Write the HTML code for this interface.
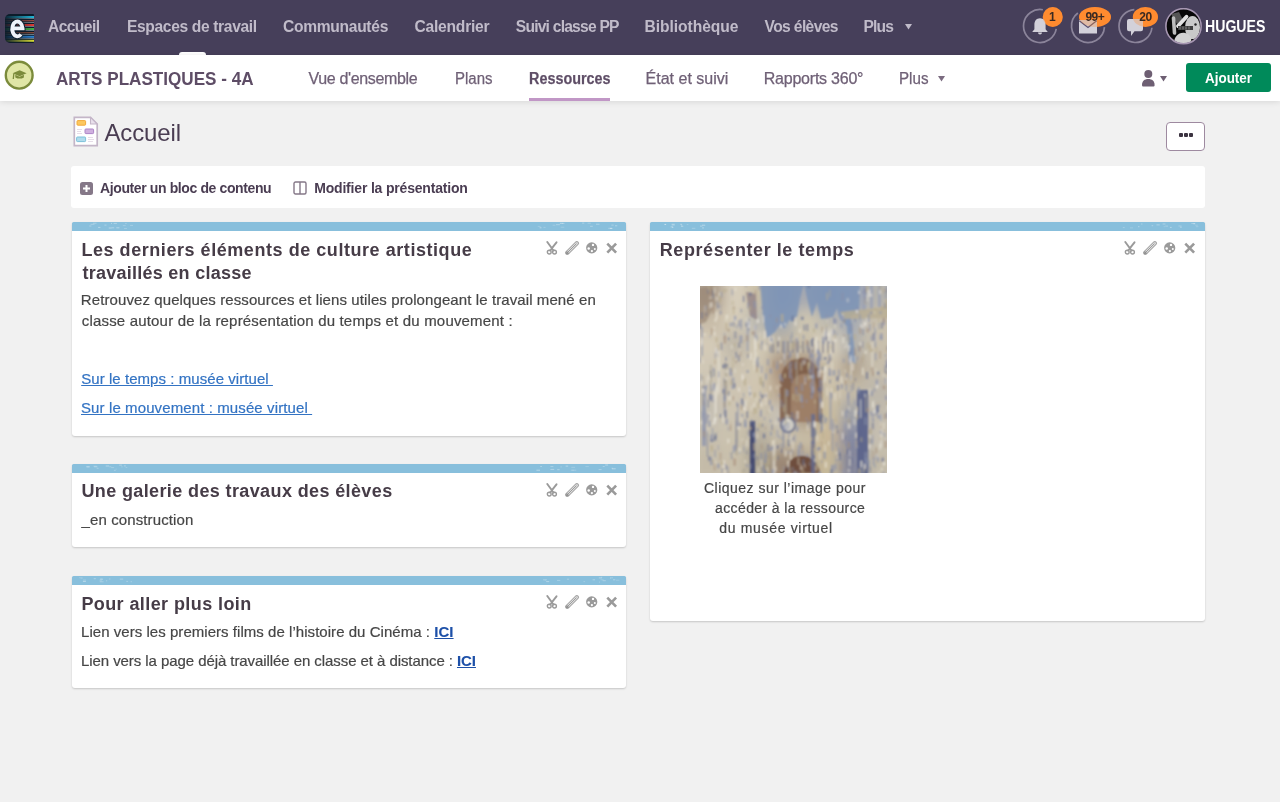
<!DOCTYPE html>
<html><head><meta charset="utf-8">
<style>
*{margin:0;padding:0;box-sizing:border-box}
html,body{width:1280px;height:802px;overflow:hidden;background:#f1f1f1;font-family:"Liberation Sans",sans-serif}
.abs{position:absolute;white-space:nowrap}
#top{position:absolute;left:0;top:0;width:1280px;height:55px;background:#463f5a}
.nav{position:absolute;top:17.5px;font-size:15.6px;font-weight:bold;color:#c0bbc9;line-height:18px}
#sub{position:absolute;left:0;top:55px;width:1280px;height:46px;background:#fff;box-shadow:0 1px 6px rgba(0,0,0,.11)}
.snav{position:absolute;top:69px;font-size:16px;color:#6f6076;line-height:19px;-webkit-text-stroke:0.25px #6f6076}
.card{position:absolute;background:#fff;border-radius:3px;box-shadow:0 1px 2px rgba(0,0,0,.18)}
.bar{position:absolute;left:0;top:0;right:0;height:9px;background:#88bfdc;border-radius:1.5px 1.5px 0 0}
.ttl{position:absolute;font-size:18px;font-weight:bold;color:#463c47;line-height:23px}
.txt{position:absolute;font-size:15px;color:#464646;line-height:22px;-webkit-text-stroke:0.2px #464646}
.lnk{color:#3373c3;text-decoration:underline;-webkit-text-stroke:0.2px #3373c3}
.ic{position:absolute;top:19px}
.ici{color:#1d50a8;text-decoration:underline;-webkit-text-stroke:0.1px #1d50a8}
</style></head><body><div id="wrap" style="position:absolute;left:0;top:0;width:1280px;height:802px;overflow:hidden;will-change:transform">
<div id="top">
  <!-- logo -->
  <svg class="abs" style="left:5px;top:13.5px" width="29" height="29" viewBox="0 0 29 29">
    <defs><clipPath id="lc"><path d="M5 0H28a1 1 0 0 1 1 1V28a1 1 0 0 1-1 1H5a5 5 0 0 1-5-5V5a5 5 0 0 1 5-5z"/></clipPath>
    <linearGradient id="lg" x1="0" x2="1" y1="0" y2="0"><stop offset="0" stop-color="#fff" stop-opacity="0.05"/><stop offset="0.45" stop-color="#fff" stop-opacity="0.5"/><stop offset="1" stop-color="#fff" stop-opacity="1"/></linearGradient>
    <mask id="lm"><rect width="29" height="29" fill="url(#lg)"/></mask></defs>
    <g clip-path="url(#lc)">
      <rect width="29" height="29" fill="#0c1d2b"/>
      <g mask="url(#lm)">
      <rect x="0" y="2" width="29" height="2" fill="#22b4d6"/>
      <rect x="0" y="6" width="29" height="1.4" fill="#9a4a40"/>
      <rect x="0" y="10" width="29" height="2" fill="#e23a34"/>
      <rect x="0" y="14" width="29" height="2" fill="#43b043"/>
      <rect x="0" y="18" width="29" height="1.4" fill="#8a4a38"/>
      <rect x="0" y="21.8" width="29" height="2" fill="#2f86d6"/>
      <rect x="0" y="25.8" width="29" height="2" fill="#d9dc34"/>
      <g fill="#9aa8b0"><rect x="0" y="4.2" width="29" height=".7"/><rect x="0" y="8.2" width="29" height=".7"/><rect x="0" y="12.3" width="29" height=".7"/><rect x="0" y="16.3" width="29" height=".7"/><rect x="0" y="20" width="29" height=".7"/><rect x="0" y="24" width="29" height=".7"/></g>
      </g>
    </g>
    <path d="M7.2 14.3H17.6A5.2 7.4 0 1 0 15.9 20.4" fill="none" stroke="#0c1d2b" stroke-width="5.6"/>
    <path d="M7.2 14.3H17.6A5.2 7.4 0 1 0 15.9 20.4" fill="none" stroke="#eef3fa" stroke-width="3.8"/>
  </svg>
  <div id="n1" class="nav" style="left:48px;letter-spacing:-0.584px">Accueil</div>
  <div id="n2" class="nav" style="left:127px;letter-spacing:-0.353px">Espaces de travail</div>
  <div id="n3" class="nav" style="left:283px;letter-spacing:-0.3px">Communautés</div>
  <div id="n4" class="nav" style="left:414.5px;letter-spacing:-0.222px">Calendrier</div>
  <div id="n5" class="nav" style="left:515.75px;letter-spacing:-0.768px">Suivi classe PP</div>
  <div id="n6" class="nav" style="left:644.5px;letter-spacing:-0.045px">Bibliothèque</div>
  <div id="n7" class="nav" style="left:764.5px;letter-spacing:-0.612px">Vos élèves</div>
  <div id="n8" class="nav" style="left:863.5px;letter-spacing:-0.834px">Plus</div>
  <svg class="abs" style="left:905px;top:24px" width="7" height="6"><path d="M0 0H7L3.5 5.5Z" fill="#c0bbc9"/></svg>
  <div class="abs" style="left:179px;top:52px;width:27px;height:3px;background:#fff;border-radius:3px 3px 0 0"></div>

  <!-- notification icons -->
  <svg class="abs" style="left:1015px;top:0" width="150" height="55" viewBox="1015 0 150 55">
    <path d="M1042.87 9.75A16.5 16.5 0 1 0 1056.25 28.87 M1077.84 13.00A16.5 16.5 0 1 0 1104.46 27.15 M1134.35 9.54A16.5 16.5 0 1 0 1151.91 27.72" fill="none" stroke="#8b849a" stroke-width="1.7"/>
    <g fill="#ff8b2f">
      <circle cx="1052.75" cy="17" r="10"/>
      <ellipse cx="1095" cy="17" rx="16" ry="10"/>
      <ellipse cx="1145.4" cy="17" rx="12.6" ry="10"/>
    </g>
    <g>
    <path d="M1040 18.2c-3.6 0-5.6 2.8-5.6 6.4v4.6l-2.2 2.8h15.6l-2.2-2.8v-4.6c0-3.6-2-6.4-5.6-6.4z M1038 32.5h4a2 2 0 0 1-4 0z" fill="#d3d1da"/>
    <rect x="1079" y="20" width="18" height="13.5" fill="#d3d1da"/>
    <path d="M1079.3 20.8l8.7 6.6 8.7-6.6" fill="none" stroke="#5a5170" stroke-width="1.3"/>
    <path d="M1129 19h12a2 2 0 0 1 2 2v8.2a2 2 0 0 1-2 2h-6.5l-3.5 4.8v-4.8h-2a2 2 0 0 1-2-2v-8.2a2 2 0 0 1 2-2z" fill="#d3d1da"/>
    </g>
    <g fill="#ff8b2f" opacity="0.3">
      <circle cx="1052.75" cy="17" r="10"/>
      <ellipse cx="1095" cy="17" rx="16" ry="10"/>
      <ellipse cx="1145.4" cy="17" rx="12.6" ry="10"/>
    </g>
    <g font-family="Liberation Sans" font-size="12" font-weight="bold" fill="#3b2a22" text-anchor="middle">
      <text x="1052.4" y="21.4">1</text>
      <text x="1094.8" y="21.4" letter-spacing="-0.6">99+</text>
      <text x="1145.5" y="21.4" letter-spacing="-0.3">20</text>
    </g>
  </svg>
  <!-- avatar -->
  <svg class="abs" style="left:1165px;top:8px" width="37" height="37" viewBox="0 0 37 37">
    <defs><clipPath id="av"><circle cx="18.5" cy="18.2" r="17"/></clipPath><filter id="avb"><feGaussianBlur stdDeviation="0.5"/></filter></defs>
    <circle cx="18.5" cy="18.2" r="17.5" fill="#080808"/>
    <g clip-path="url(#av)" filter="url(#avb)">
      <path d="M6 6l8-2 4 8-6 4z" fill="#555"/>
      <ellipse cx="27.5" cy="19.5" rx="7.5" ry="11.5" fill="#c9c9c9"/>
      <path d="M9 36C9 28 14 24 20 25S27 31 26 38z" fill="#d2d2d2"/>
      <path d="M8.5 10L9.5 25" stroke="#bdbdbd" stroke-width="3.6" stroke-linecap="round"/>
      <path d="M13 18L21.5 8.7" stroke="#e2e2e2" stroke-width="3.8" stroke-linecap="round"/>
      <rect x="13" y="18" width="15" height="4" fill="#3c3c3c"/>
      <path d="M15 18.5v3M18 18.5v3M21 18.5v3M24 18.5v3" stroke="#9a9a9a" stroke-width=".8"/>
      <circle cx="30.5" cy="16.5" r="1.2" fill="#222"/>
      <path d="M0 26c4 2 6 6 6 12H0z" fill="#111"/>
    </g>
    <circle cx="18.5" cy="18.2" r="17.6" fill="none" stroke="#a797b2" stroke-width="1.6"/>
  </svg>
  <div id="n9" class="nav" style="left:1205px;transform:scaleX(0.905);transform-origin:0 0;color:#fff">HUGUES</div>
</div>

<div id="sub">
  <svg class="abs" style="left:4px;top:5px" width="31" height="31" viewBox="0 0 31 31">
    <circle cx="15.2" cy="15.2" r="13.4" fill="#e0e6a6" stroke="#7b8b3b" stroke-width="2.4"/>
    <path d="M8.6 13.3l7-3 7 3-7 3z" fill="#7b8b3b"/>
    <path d="M11.3 14.8v2.6c2.6 1.6 6 1.6 8.6 0v-2.6l-4.3 1.9z" fill="#7b8b3b"/>
    <path d="M9.8 13.8l-.5 5.2" stroke="#7b8b3b" stroke-width="1.3"/>
  </svg>
</div>
<div id="s0" class="abs" style="left:56.25px;transform:scaleX(0.8995);transform-origin:0 0;top:67.0px;font-size:19px;font-weight:bold;color:#5e4d66;line-height:23px">ARTS PLASTIQUES - 4A</div>
<div id="s1" class="snav" style="left:308.5px;letter-spacing:-0.346px">Vue d'ensemble</div>
<div id="s2" class="snav" style="left:454.5px;transform:scaleX(0.9361);transform-origin:0 0">Plans</div>
<div id="s3" class="snav" style="left:528.5px;transform:scaleX(0.8989);transform-origin:0 0;font-weight:bold;color:#5e4d66">Ressources</div>
<div class="abs" style="left:529px;top:98px;width:81px;height:3px;background:#c197c6"></div>
<div id="s4" class="snav" style="left:645.6px;letter-spacing:0.0px">État et suivi</div>
<div id="s5" class="snav" style="left:763.8px;letter-spacing:-0.233px">Rapports 360°</div>
<div id="s6" class="snav" style="left:898.8px;transform:scaleX(0.9473);transform-origin:0 0">Plus</div>
<svg class="abs" style="left:938px;top:76px" width="7" height="6"><path d="M0 0H7L3.5 5.5Z" fill="#7b6b80"/></svg>
<svg class="abs" style="left:1141px;top:70px" width="27" height="17" viewBox="0 0 27 17">
  <circle cx="7.3" cy="4" r="4" fill="#6e5f73"/>
  <path d="M1 15c0-4 2.5-6 6.3-6s6.3 2 6.3 6c0 1-.6 1.5-1.5 1.5h-9.6c-.9 0-1.5-.5-1.5-1.5z" fill="#6e5f73"/>
  <path d="M19 6h7l-3.5 5.5z" fill="#6e5f73"/>
</svg>
<div class="abs" style="left:1186px;top:63px;width:85px;height:29px;background:#008a5a;border-radius:3px"></div>
<div id="s7" class="abs" style="left:1205px;transform:scaleX(0.9592);transform-origin:0 0;top:70.0px;font-size:14px;font-weight:bold;color:#fff;line-height:17px">Ajouter</div>

<!-- page title -->
<svg class="abs" style="left:73px;top:116px" width="26" height="31" viewBox="0 0 26 31">
  <path d="M1.3 1.3h16.2l6.7 6.7v21.7H1.3z" fill="#fff" stroke="#c4b6c8" stroke-width="1.7"/>
  <path d="M17.5 1.3v6.7h6.7z" fill="#e9e1ec" stroke="#c4b6c8" stroke-width="1.1" stroke-linejoin="round"/>
  <rect x="4" y="4.6" width="8.6" height="4.6" rx=".8" fill="#fcc860" stroke="#f2a93a" stroke-width="1"/>
  <rect x="12" y="13" width="8.6" height="4.6" rx=".8" fill="#cfb0df" stroke="#ad84c6" stroke-width="1"/>
  <rect x="3.6" y="21" width="9" height="4.6" rx=".8" fill="#b1dcec" stroke="#7cc0da" stroke-width="1"/>
  <path d="M4 13.5h5M4 15.5h4M4 17.5h5M15 21.5h5M15 23.5h6M15 25.5h5" stroke="#e6dde8" stroke-width="1"/>
</svg>
<div id="p1" class="abs" style="left:104.4px;letter-spacing:-0.133px;top:119.0px;font-size:24px;color:#4a3d52;line-height:28px">Accueil</div>
<div class="abs" style="left:1166px;top:122px;width:39px;height:29px;background:#fff;border:1.6px solid #9e8aa0;border-radius:4px"></div>
<div class="abs" style="left:1179px;top:133px;width:4px;height:4px;background:#3b3340;border-radius:1px"></div>
<div class="abs" style="left:1184px;top:133px;width:4px;height:4px;background:#3b3340;border-radius:1px"></div>
<div class="abs" style="left:1189px;top:133px;width:4px;height:4px;background:#3b3340;border-radius:1px"></div>

<!-- toolbar -->
<div class="abs" style="left:71px;top:166px;width:1134px;height:42px;background:#fff;border-radius:3px"></div>
<svg class="abs" style="left:80px;top:182px" width="13" height="13" viewBox="0 0 13 13">
  <rect width="13" height="13" rx="2.5" fill="#857888"/>
  <path d="M6.5 3v7M3 6.5h7" stroke="#fff" stroke-width="2"/>
</svg>
<div id="t1" class="abs" style="left:100px;letter-spacing:-0.384px;top:180px;font-size:14px;font-weight:bold;color:#4a3d52;line-height:17px">Ajouter un bloc de contenu</div>
<svg class="abs" style="left:293px;top:181px" width="14" height="14" viewBox="0 0 14 14">
  <rect x="1" y="1" width="12" height="12" rx="1.5" fill="none" stroke="#857888" stroke-width="1.4"/>
  <path d="M7 1v12" stroke="#857888" stroke-width="1.4"/>
</svg>
<div id="t2" class="abs" style="left:314.2px;letter-spacing:-0.182px;top:180px;font-size:14px;font-weight:bold;color:#4a3d52;line-height:17px">Modifier la présentation</div>



<!-- block 1 -->
<div class="card" style="left:72px;top:222px;width:554px;height:214px">
  <div class="bar"><svg class="abs" style="left:0;top:0" width="554" height="9"><rect x="17.3" y="3.5" width="2.1" height="1" fill="#fff" opacity="0.30"/><rect x="39.0" y="0.9" width="1.0" height="1" fill="#fff" opacity="0.35"/><rect x="18.5" y="1.8" width="4.0" height="1" fill="#fff" opacity="0.27"/><rect x="50.8" y="3.1" width="2.9" height="1" fill="#fff" opacity="0.20"/><rect x="39.6" y="5.3" width="2.6" height="1" fill="#fff" opacity="0.33"/><rect x="41.6" y="0.9" width="3.3" height="1" fill="#fff" opacity="0.30"/><rect x="20.9" y="0.7" width="3.6" height="1" fill="#fff" opacity="0.27"/><rect x="44.3" y="5.3" width="3.1" height="1" fill="#fff" opacity="0.37"/><rect x="26.1" y="4.9" width="2.3" height="1" fill="#fff" opacity="0.37"/><rect x="53.2" y="1.0" width="1.4" height="1" fill="#fff" opacity="0.21"/><rect x="58.1" y="2.9" width="2.9" height="1" fill="#fff" opacity="0.23"/><rect x="32.4" y="2.6" width="2.1" height="1" fill="#fff" opacity="0.29"/><rect x="36.7" y="5.5" width="3.0" height="1" fill="#fff" opacity="0.37"/><rect x="52.0" y="6.0" width="3.0" height="1" fill="#fff" opacity="0.20"/><rect x="536.3" y="5.8" width="3.7" height="1" fill="#fff" opacity="0.29"/><rect x="524.0" y="1.7" width="3.5" height="1" fill="#fff" opacity="0.29"/><rect x="487.9" y="0.8" width="3.6" height="1" fill="#fff" opacity="0.39"/><rect x="471.4" y="4.9" width="2.2" height="1" fill="#fff" opacity="0.20"/><rect x="488.7" y="4.7" width="3.6" height="1" fill="#fff" opacity="0.18"/><rect x="515.6" y="0.7" width="3.2" height="1" fill="#fff" opacity="0.24"/><rect x="538.0" y="5.9" width="2.5" height="1" fill="#fff" opacity="0.39"/><rect x="490.0" y="0.9" width="2.8" height="1" fill="#fff" opacity="0.17"/><rect x="480.6" y="2.7" width="2.8" height="1" fill="#fff" opacity="0.20"/><rect x="467.6" y="5.3" width="1.9" height="1" fill="#fff" opacity="0.37"/><rect x="539.3" y="2.6" width="2.4" height="1" fill="#fff" opacity="0.28"/><rect x="518.1" y="3.8" width="2.7" height="1" fill="#fff" opacity="0.30"/><rect x="543.0" y="3.3" width="2.3" height="1" fill="#fff" opacity="0.32"/><rect x="484.0" y="2.2" width="3.9" height="1" fill="#fff" opacity="0.28"/><rect x="510.1" y="0.6" width="2.2" height="1" fill="#fff" opacity="0.29"/><rect x="465.7" y="3.9" width="2.9" height="1" fill="#fff" opacity="0.18"/></svg></div>
  <svg class="ic" style="left:474px" width="72" height="14" viewBox="0 -0.5 72 14">
      <path d="M1.3 .5L6.2 7.2L4 8.9M10.5 .8L5.6 7.2L7.8 8.9" stroke="#9a9a9a" stroke-width="1.9" fill="none" stroke-linecap="round" stroke-linejoin="round"/>
      <circle cx="3.25" cy="10.6" r="1.9" stroke="#9a9a9a" stroke-width="1.4" fill="none"/>
      <circle cx="8.5" cy="10.6" r="1.9" stroke="#9a9a9a" stroke-width="1.4" fill="none"/>
      <path d="M21.3 11.2L30.8 1.8" stroke="#a8a8a8" stroke-width="4.4" stroke-linecap="round"/>
      <path d="M21.3 11.2L30.8 1.8" stroke="#e4e4e4" stroke-width="2.2" stroke-linecap="round"/>
      <path d="M21.8 10.7L30.5 2.1" stroke="#9a9a9a" stroke-width="1"/>
      <path d="M19.8 12.8l.9-3.6 2.7 2.7z" fill="#8f8f8f"/>
      <circle cx="45.7" cy="6.4" r="5.6" fill="#9a9a9a"/>
      <g fill="#fff"><circle cx="47" cy="3.4" r="1.2"/><circle cx="42.7" cy="7" r="1.25"/><circle cx="45.9" cy="9.6" r="1.15"/><circle cx="48.8" cy="7.6" r="1"/></g>
      <path d="M61.3 2.1l8.8 9.1M70.1 2.1l-8.8 9.1" stroke="#9a9a9a" stroke-width="2.6"/>
    </svg>
  <div id="b1a" class="ttl" style="left:9.4px;letter-spacing:0.552px;top:17.0px">Les derniers éléments de culture artistique</div>
  <div id="b1b" class="ttl" style="left:10.4px;letter-spacing:0.263px;top:39.6px">travaillés en classe</div>
  <div id="b1c" class="txt" style="left:8.8px;letter-spacing:0.096px;top:66.7px">Retrouvez quelques ressources et liens utiles prolongeant le travail mené en</div>
  <div id="b1d" class="txt" style="left:9.8px;letter-spacing:0.177px;top:88.3px">classe autour de la représentation du temps et du mouvement :</div>
  <div id="b1e" class="txt lnk" style="left:9.2px;letter-spacing:0.057px;top:146.4px">Sur le temps : musée virtuel&nbsp;</div>
  <div id="b1f" class="txt lnk" style="left:9px;letter-spacing:0.107px;top:175.3px">Sur le mouvement : musée virtuel&nbsp;</div>
</div>

<!-- block 2 -->
<div class="card" style="left:72px;top:464px;width:554px;height:83px">
  <div class="bar"><svg class="abs" style="left:0;top:0" width="554" height="9"><rect x="39.1" y="3.1" width="3.0" height="1" fill="#fff" opacity="0.24"/><rect x="43.6" y="4.6" width="1.1" height="1" fill="#fff" opacity="0.18"/><rect x="41.9" y="5.8" width="1.8" height="1" fill="#fff" opacity="0.26"/><rect x="37.2" y="2.3" width="2.1" height="1" fill="#fff" opacity="0.24"/><rect x="24.7" y="3.8" width="1.9" height="1" fill="#fff" opacity="0.25"/><rect x="47.2" y="0.6" width="2.7" height="1" fill="#fff" opacity="0.32"/><rect x="21.4" y="1.7" width="3.4" height="1" fill="#fff" opacity="0.22"/><rect x="14.5" y="2.9" width="3.1" height="1" fill="#fff" opacity="0.19"/><rect x="22.0" y="2.3" width="3.5" height="1" fill="#fff" opacity="0.26"/><rect x="51.9" y="1.4" width="2.0" height="1" fill="#fff" opacity="0.31"/><rect x="53.6" y="3.0" width="1.7" height="1" fill="#fff" opacity="0.19"/><rect x="33.7" y="1.5" width="3.4" height="1" fill="#fff" opacity="0.35"/><rect x="14.3" y="2.0" width="3.4" height="1" fill="#fff" opacity="0.31"/><rect x="49.2" y="2.4" width="1.4" height="1" fill="#fff" opacity="0.23"/><rect x="530.7" y="2.0" width="2.0" height="1" fill="#fff" opacity="0.26"/><rect x="499.3" y="2.8" width="3.8" height="1" fill="#fff" opacity="0.20"/><rect x="464.4" y="5.7" width="3.6" height="1" fill="#fff" opacity="0.38"/><rect x="500.5" y="5.7" width="3.8" height="1" fill="#fff" opacity="0.21"/><rect x="526.6" y="5.1" width="3.0" height="1" fill="#fff" opacity="0.28"/><rect x="488.3" y="2.4" width="1.7" height="1" fill="#fff" opacity="0.18"/><rect x="513.4" y="2.1" width="3.4" height="1" fill="#fff" opacity="0.18"/><rect x="539.9" y="4.3" width="3.8" height="1" fill="#fff" opacity="0.36"/><rect x="539.6" y="3.7" width="1.0" height="1" fill="#fff" opacity="0.33"/><rect x="478.4" y="2.1" width="3.0" height="1" fill="#fff" opacity="0.28"/><rect x="498.8" y="5.7" width="2.8" height="1" fill="#fff" opacity="0.24"/><rect x="485.2" y="5.2" width="2.4" height="1" fill="#fff" opacity="0.34"/><rect x="493.6" y="1.6" width="2.6" height="1" fill="#fff" opacity="0.35"/><rect x="478.4" y="4.9" width="3.8" height="1" fill="#fff" opacity="0.34"/><rect x="533.2" y="0.5" width="2.9" height="1" fill="#fff" opacity="0.36"/><rect x="468.2" y="2.0" width="1.8" height="1" fill="#fff" opacity="0.28"/></svg></div>
  <svg class="ic" style="left:474px" width="72" height="14" viewBox="0 -0.5 72 14">
      <path d="M1.3 .5L6.2 7.2L4 8.9M10.5 .8L5.6 7.2L7.8 8.9" stroke="#9a9a9a" stroke-width="1.9" fill="none" stroke-linecap="round" stroke-linejoin="round"/>
      <circle cx="3.25" cy="10.6" r="1.9" stroke="#9a9a9a" stroke-width="1.4" fill="none"/>
      <circle cx="8.5" cy="10.6" r="1.9" stroke="#9a9a9a" stroke-width="1.4" fill="none"/>
      <path d="M21.3 11.2L30.8 1.8" stroke="#a8a8a8" stroke-width="4.4" stroke-linecap="round"/>
      <path d="M21.3 11.2L30.8 1.8" stroke="#e4e4e4" stroke-width="2.2" stroke-linecap="round"/>
      <path d="M21.8 10.7L30.5 2.1" stroke="#9a9a9a" stroke-width="1"/>
      <path d="M19.8 12.8l.9-3.6 2.7 2.7z" fill="#8f8f8f"/>
      <circle cx="45.7" cy="6.4" r="5.6" fill="#9a9a9a"/>
      <g fill="#fff"><circle cx="47" cy="3.4" r="1.2"/><circle cx="42.7" cy="7" r="1.25"/><circle cx="45.9" cy="9.6" r="1.15"/><circle cx="48.8" cy="7.6" r="1"/></g>
      <path d="M61.3 2.1l8.8 9.1M70.1 2.1l-8.8 9.1" stroke="#9a9a9a" stroke-width="2.6"/>
    </svg>
  <div id="b2a" class="ttl" style="left:9.4px;letter-spacing:0.382px;top:16.3px">Une galerie des travaux des élèves</div>
  <div id="b2b" class="txt" style="left:9.6px;letter-spacing:0.107px;top:45.3px">_en construction</div>
</div>

<!-- block 3 -->
<div class="card" style="left:72px;top:576px;width:554px;height:112px">
  <div class="bar"><svg class="abs" style="left:0;top:0" width="554" height="9"><rect x="27.7" y="3.1" width="3.3" height="1" fill="#fff" opacity="0.17"/><rect x="7.1" y="1.2" width="1.4" height="1" fill="#fff" opacity="0.18"/><rect x="58.6" y="5.2" width="1.3" height="1" fill="#fff" opacity="0.28"/><rect x="21.7" y="2.2" width="2.1" height="1" fill="#fff" opacity="0.31"/><rect x="36.9" y="2.5" width="1.6" height="1" fill="#fff" opacity="0.24"/><rect x="10.9" y="3.6" width="3.1" height="1" fill="#fff" opacity="0.25"/><rect x="8.5" y="1.5" width="2.1" height="1" fill="#fff" opacity="0.30"/><rect x="47.8" y="2.6" width="3.4" height="1" fill="#fff" opacity="0.30"/><rect x="28.2" y="2.5" width="2.5" height="1" fill="#fff" opacity="0.32"/><rect x="27.5" y="4.3" width="2.4" height="1" fill="#fff" opacity="0.22"/><rect x="34.0" y="4.3" width="1.2" height="1" fill="#fff" opacity="0.26"/><rect x="27.8" y="5.3" width="3.8" height="1" fill="#fff" opacity="0.25"/><rect x="54.3" y="4.9" width="1.8" height="1" fill="#fff" opacity="0.27"/><rect x="10.9" y="5.0" width="3.0" height="1" fill="#fff" opacity="0.36"/><rect x="530.6" y="4.2" width="3.2" height="1" fill="#fff" opacity="0.29"/><rect x="472.7" y="3.7" width="1.0" height="1" fill="#fff" opacity="0.20"/><rect x="529.0" y="0.7" width="1.3" height="1" fill="#fff" opacity="0.19"/><rect x="538.0" y="1.5" width="1.1" height="1" fill="#fff" opacity="0.35"/><rect x="474.2" y="5.1" width="3.0" height="1" fill="#fff" opacity="0.35"/><rect x="544.0" y="3.7" width="3.4" height="1" fill="#fff" opacity="0.17"/><rect x="528.5" y="3.3" width="3.1" height="1" fill="#fff" opacity="0.19"/><rect x="526.9" y="5.6" width="1.2" height="1" fill="#fff" opacity="0.24"/><rect x="511.4" y="5.1" width="1.7" height="1" fill="#fff" opacity="0.20"/><rect x="485.0" y="3.9" width="3.3" height="1" fill="#fff" opacity="0.25"/><rect x="494.9" y="2.7" width="2.1" height="1" fill="#fff" opacity="0.26"/><rect x="471.0" y="3.3" width="3.9" height="1" fill="#fff" opacity="0.26"/><rect x="526.8" y="1.4" width="3.1" height="1" fill="#fff" opacity="0.33"/><rect x="520.6" y="3.3" width="2.5" height="1" fill="#fff" opacity="0.31"/><rect x="539.4" y="1.3" width="1.3" height="1" fill="#fff" opacity="0.33"/><rect x="541.0" y="3.3" width="2.3" height="1" fill="#fff" opacity="0.32"/></svg></div>
  <svg class="ic" style="left:474px" width="72" height="14" viewBox="0 -0.5 72 14">
      <path d="M1.3 .5L6.2 7.2L4 8.9M10.5 .8L5.6 7.2L7.8 8.9" stroke="#9a9a9a" stroke-width="1.9" fill="none" stroke-linecap="round" stroke-linejoin="round"/>
      <circle cx="3.25" cy="10.6" r="1.9" stroke="#9a9a9a" stroke-width="1.4" fill="none"/>
      <circle cx="8.5" cy="10.6" r="1.9" stroke="#9a9a9a" stroke-width="1.4" fill="none"/>
      <path d="M21.3 11.2L30.8 1.8" stroke="#a8a8a8" stroke-width="4.4" stroke-linecap="round"/>
      <path d="M21.3 11.2L30.8 1.8" stroke="#e4e4e4" stroke-width="2.2" stroke-linecap="round"/>
      <path d="M21.8 10.7L30.5 2.1" stroke="#9a9a9a" stroke-width="1"/>
      <path d="M19.8 12.8l.9-3.6 2.7 2.7z" fill="#8f8f8f"/>
      <circle cx="45.7" cy="6.4" r="5.6" fill="#9a9a9a"/>
      <g fill="#fff"><circle cx="47" cy="3.4" r="1.2"/><circle cx="42.7" cy="7" r="1.25"/><circle cx="45.9" cy="9.6" r="1.15"/><circle cx="48.8" cy="7.6" r="1"/></g>
      <path d="M61.3 2.1l8.8 9.1M70.1 2.1l-8.8 9.1" stroke="#9a9a9a" stroke-width="2.6"/>
    </svg>
  <div id="b3a" class="ttl" style="left:9.4px;letter-spacing:0.41px;top:16.5px">Pour aller plus loin</div>
  <div id="b3b" class="txt" style="left:9.0px;letter-spacing:0.042px;top:44.9px">Lien vers les premiers films de l’histoire du Cinéma : <b class="ici">ICI</b></div>
  <div id="b3c" class="txt" style="left:9.0px;letter-spacing:-0.071px;top:74px">Lien vers la page déjà travaillée en classe et à distance : <b class="ici">ICI</b></div>
</div>

<!-- block 4 -->
<div class="card" style="left:650px;top:222px;width:555px;height:399px">
  <div class="bar"><svg class="abs" style="left:0;top:0" width="555" height="9"><rect x="14.4" y="2.0" width="1.6" height="1" fill="#fff" opacity="0.29"/><rect x="21.6" y="1.8" width="3.1" height="1" fill="#fff" opacity="0.37"/><rect x="20.6" y="4.4" width="2.2" height="1" fill="#fff" opacity="0.35"/><rect x="36.7" y="2.0" width="1.7" height="1" fill="#fff" opacity="0.17"/><rect x="30.9" y="2.6" width="1.5" height="1" fill="#fff" opacity="0.24"/><rect x="22.0" y="4.8" width="1.4" height="1" fill="#fff" opacity="0.39"/><rect x="30.9" y="3.8" width="2.4" height="1" fill="#fff" opacity="0.35"/><rect x="50.0" y="3.6" width="2.4" height="1" fill="#fff" opacity="0.32"/><rect x="52.0" y="2.7" width="3.2" height="1" fill="#fff" opacity="0.37"/><rect x="30.2" y="1.8" width="1.7" height="1" fill="#fff" opacity="0.32"/><rect x="41.8" y="5.8" width="3.6" height="1" fill="#fff" opacity="0.22"/><rect x="14.6" y="1.9" width="1.6" height="1" fill="#fff" opacity="0.32"/><rect x="52.1" y="5.4" width="1.8" height="1" fill="#fff" opacity="0.36"/><rect x="21.6" y="2.8" width="3.2" height="1" fill="#fff" opacity="0.18"/><rect x="472.8" y="5.1" width="1.9" height="1" fill="#fff" opacity="0.24"/><rect x="513.7" y="4.2" width="1.0" height="1" fill="#fff" opacity="0.24"/><rect x="501.6" y="3.2" width="1.6" height="1" fill="#fff" opacity="0.29"/><rect x="545.2" y="2.7" width="2.6" height="1" fill="#fff" opacity="0.19"/><rect x="488.1" y="4.2" width="1.3" height="1" fill="#fff" opacity="0.36"/><rect x="541.3" y="1.0" width="3.8" height="1" fill="#fff" opacity="0.25"/><rect x="529.9" y="4.7" width="1.9" height="1" fill="#fff" opacity="0.31"/><rect x="519.9" y="4.9" width="1.8" height="1" fill="#fff" opacity="0.33"/><rect x="545.8" y="4.2" width="2.6" height="1" fill="#fff" opacity="0.19"/><rect x="506.5" y="2.4" width="3.2" height="1" fill="#fff" opacity="0.31"/><rect x="512.6" y="1.5" width="2.9" height="1" fill="#fff" opacity="0.30"/><rect x="480.0" y="5.4" width="3.0" height="1" fill="#fff" opacity="0.19"/><rect x="543.3" y="1.3" width="2.0" height="1" fill="#fff" opacity="0.32"/><rect x="515.2" y="3.6" width="2.9" height="1" fill="#fff" opacity="0.26"/><rect x="491.2" y="1.5" width="1.2" height="1" fill="#fff" opacity="0.32"/><rect x="528.4" y="3.5" width="3.2" height="1" fill="#fff" opacity="0.24"/></svg></div>
  <svg class="ic" style="left:474px" width="72" height="14" viewBox="0 -0.5 72 14">
      <path d="M1.3 .5L6.2 7.2L4 8.9M10.5 .8L5.6 7.2L7.8 8.9" stroke="#9a9a9a" stroke-width="1.9" fill="none" stroke-linecap="round" stroke-linejoin="round"/>
      <circle cx="3.25" cy="10.6" r="1.9" stroke="#9a9a9a" stroke-width="1.4" fill="none"/>
      <circle cx="8.5" cy="10.6" r="1.9" stroke="#9a9a9a" stroke-width="1.4" fill="none"/>
      <path d="M21.3 11.2L30.8 1.8" stroke="#a8a8a8" stroke-width="4.4" stroke-linecap="round"/>
      <path d="M21.3 11.2L30.8 1.8" stroke="#e4e4e4" stroke-width="2.2" stroke-linecap="round"/>
      <path d="M21.8 10.7L30.5 2.1" stroke="#9a9a9a" stroke-width="1"/>
      <path d="M19.8 12.8l.9-3.6 2.7 2.7z" fill="#8f8f8f"/>
      <circle cx="45.7" cy="6.4" r="5.6" fill="#9a9a9a"/>
      <g fill="#fff"><circle cx="47" cy="3.4" r="1.2"/><circle cx="42.7" cy="7" r="1.25"/><circle cx="45.9" cy="9.6" r="1.15"/><circle cx="48.8" cy="7.6" r="1"/></g>
      <path d="M61.3 2.1l8.8 9.1M70.1 2.1l-8.8 9.1" stroke="#9a9a9a" stroke-width="2.6"/>
    </svg>
  <div id="b4a" class="ttl" style="left:9.8px;letter-spacing:0.579px;top:16.7px">Représenter le temps</div>
  <svg class="abs" style="left:50px;top:64px" width="187" height="187" viewBox="0 0 187 187">
<defs><filter id="pg" x="-10%" y="-10%" width="120%" height="120%"><feGaussianBlur stdDeviation="7"/></filter><filter id="pb" x="-5%" y="-5%" width="110%" height="110%"><feGaussianBlur stdDeviation="0.9"/></filter><clipPath id="pc"><rect width="187" height="187"/></clipPath></defs>
<g clip-path="url(#pc)">
<g filter="url(#pg)">
<rect x="-12.0" y="-12.0" width="35.9" height="35.9" fill="#a99a88"/>
<rect x="23.4" y="-12.0" width="23.9" height="35.9" fill="#d8cfbd"/>
<rect x="46.8" y="-12.0" width="23.9" height="35.9" fill="#c8bda5"/>
<rect x="70.1" y="-12.0" width="23.9" height="35.9" fill="#8097b8"/>
<rect x="93.5" y="-12.0" width="23.9" height="35.9" fill="#a8aab0"/>
<rect x="116.9" y="-12.0" width="23.9" height="35.9" fill="#8398b6"/>
<rect x="140.2" y="-12.0" width="23.9" height="35.9" fill="#98a3b5"/>
<rect x="163.6" y="-12.0" width="35.9" height="35.9" fill="#b5b3ad"/>
<rect x="-12.0" y="23.4" width="35.9" height="23.9" fill="#c8bca8"/>
<rect x="23.4" y="23.4" width="23.9" height="23.9" fill="#d5ccb8"/>
<rect x="46.8" y="23.4" width="23.9" height="23.9" fill="#b9b7b0"/>
<rect x="70.1" y="23.4" width="23.9" height="23.9" fill="#a3a9b1"/>
<rect x="93.5" y="23.4" width="23.9" height="23.9" fill="#cfc6b0"/>
<rect x="116.9" y="23.4" width="23.9" height="23.9" fill="#bdb9ae"/>
<rect x="140.2" y="23.4" width="23.9" height="23.9" fill="#a5aab4"/>
<rect x="163.6" y="23.4" width="35.9" height="23.9" fill="#c9c0ad"/>
<rect x="-12.0" y="46.8" width="35.9" height="23.9" fill="#d4cbb8"/>
<rect x="23.4" y="46.8" width="23.9" height="23.9" fill="#bdb6a8"/>
<rect x="46.8" y="46.8" width="23.9" height="23.9" fill="#d2c9b5"/>
<rect x="70.1" y="46.8" width="23.9" height="23.9" fill="#bdb4a2"/>
<rect x="93.5" y="46.8" width="23.9" height="23.9" fill="#c9bfa9"/>
<rect x="116.9" y="46.8" width="23.9" height="23.9" fill="#d9d1bf"/>
<rect x="140.2" y="46.8" width="23.9" height="23.9" fill="#b3b1ac"/>
<rect x="163.6" y="46.8" width="35.9" height="23.9" fill="#c8bfad"/>
<rect x="-12.0" y="70.1" width="35.9" height="23.9" fill="#d0c8b6"/>
<rect x="23.4" y="70.1" width="23.9" height="23.9" fill="#ccc3b1"/>
<rect x="46.8" y="70.1" width="23.9" height="23.9" fill="#d0c7b3"/>
<rect x="70.1" y="70.1" width="23.9" height="23.9" fill="#a88f78"/>
<rect x="93.5" y="70.1" width="23.9" height="23.9" fill="#9c8069"/>
<rect x="116.9" y="70.1" width="23.9" height="23.9" fill="#cfc5b0"/>
<rect x="140.2" y="70.1" width="23.9" height="23.9" fill="#b0a28e"/>
<rect x="163.6" y="70.1" width="35.9" height="23.9" fill="#c6bdac"/>
<rect x="-12.0" y="93.5" width="35.9" height="23.9" fill="#c9c1b2"/>
<rect x="23.4" y="93.5" width="23.9" height="23.9" fill="#cdc4b2"/>
<rect x="46.8" y="93.5" width="23.9" height="23.9" fill="#d0c6b0"/>
<rect x="70.1" y="93.5" width="23.9" height="23.9" fill="#b7a38c"/>
<rect x="93.5" y="93.5" width="23.9" height="23.9" fill="#947a64"/>
<rect x="116.9" y="93.5" width="23.9" height="23.9" fill="#cdc2ab"/>
<rect x="140.2" y="93.5" width="23.9" height="23.9" fill="#c5bba7"/>
<rect x="163.6" y="93.5" width="35.9" height="23.9" fill="#bdb7ac"/>
<rect x="-12.0" y="116.9" width="35.9" height="23.9" fill="#c5bfb2"/>
<rect x="23.4" y="116.9" width="23.9" height="23.9" fill="#cec5b2"/>
<rect x="46.8" y="116.9" width="23.9" height="23.9" fill="#c9bfab"/>
<rect x="70.1" y="116.9" width="23.9" height="23.9" fill="#c7c2b8"/>
<rect x="93.5" y="116.9" width="23.9" height="23.9" fill="#a4917a"/>
<rect x="116.9" y="116.9" width="23.9" height="23.9" fill="#cdbf9f"/>
<rect x="140.2" y="116.9" width="23.9" height="23.9" fill="#9ea0a8"/>
<rect x="163.6" y="116.9" width="35.9" height="23.9" fill="#c3bcad"/>
<rect x="-12.0" y="140.2" width="35.9" height="23.9" fill="#c8c0ae"/>
<rect x="23.4" y="140.2" width="23.9" height="23.9" fill="#cbc2ae"/>
<rect x="46.8" y="140.2" width="23.9" height="23.9" fill="#b6ae9e"/>
<rect x="70.1" y="140.2" width="23.9" height="23.9" fill="#c8bfac"/>
<rect x="93.5" y="140.2" width="23.9" height="23.9" fill="#c7bca6"/>
<rect x="116.9" y="140.2" width="23.9" height="23.9" fill="#c9b898"/>
<rect x="140.2" y="140.2" width="23.9" height="23.9" fill="#7f84a0"/>
<rect x="163.6" y="140.2" width="35.9" height="23.9" fill="#c6bfb0"/>
<rect x="-12.0" y="163.6" width="35.9" height="35.9" fill="#c4bba8"/>
<rect x="23.4" y="163.6" width="23.9" height="35.9" fill="#c9c0ac"/>
<rect x="46.8" y="163.6" width="23.9" height="35.9" fill="#a9a290"/>
<rect x="70.1" y="163.6" width="23.9" height="35.9" fill="#9a8572"/>
<rect x="93.5" y="163.6" width="23.9" height="35.9" fill="#b3a590"/>
<rect x="116.9" y="163.6" width="23.9" height="35.9" fill="#c7b999"/>
<rect x="140.2" y="163.6" width="23.9" height="35.9" fill="#7b7f98"/>
<rect x="163.6" y="163.6" width="35.9" height="35.9" fill="#c3bba9"/>
</g>
<g filter="url(#pb)">
<path d="M60 -5H160L159 26 150 30 152 40 156 78 149 74 147 40 140 33 137 22 133 31 121 33 117 16 112 31 107 12 104 -2 100 12 97 30 93 36 89 34 85 42 79 40 75 46 67 52 63 30z" fill="#7f95b6" opacity=".9"/>
<path d="M-5 3L12 0 15 18 6 36 -5 40z" fill="#9a8878" opacity=".7"/>
<path d="M46 6L56 8 57 34 50 30z" fill="#8a7a80" opacity=".7"/>
<path d="M162 -5h4v30h-4zM170 -5h3v28h-3zM178 -5h3v26h-3z" fill="#9aa0b4" opacity=".8"/>
<path d="M140 26L192 20 192 32 145 33z" fill="#b9ae92" opacity=".8"/>
<rect x="72" y="55" width="2" height="12" fill="#7d7a88" opacity=".6"/>
<rect x="77" y="55" width="2" height="12" fill="#7d7a88" opacity=".6"/>
<rect x="82" y="55" width="2" height="12" fill="#7d7a88" opacity=".6"/>
<rect x="87" y="55" width="2" height="12" fill="#7d7a88" opacity=".6"/>
<rect x="92" y="55" width="2" height="12" fill="#7d7a88" opacity=".6"/>
<rect x="97" y="55" width="2" height="12" fill="#7d7a88" opacity=".6"/>
<rect x="102" y="55" width="2" height="12" fill="#7d7a88" opacity=".6"/>
<rect x="107" y="55" width="2" height="12" fill="#7d7a88" opacity=".6"/>
<rect x="112" y="55" width="2" height="12" fill="#7d7a88" opacity=".6"/>
<rect x="117" y="55" width="2" height="12" fill="#7d7a88" opacity=".6"/>
<rect x="122" y="55" width="2" height="12" fill="#7d7a88" opacity=".6"/>
<rect x="127" y="55" width="2" height="12" fill="#7d7a88" opacity=".6"/>
<rect x="132" y="55" width="2" height="12" fill="#7d7a88" opacity=".6"/>
<path d="M80 136V98C80 82 90 72 101 72S122 82 122 98V136z" fill="#7b5a47" opacity=".85"/>
<path d="M91 136V104C91 94 97 88 104 88S117 94 117 104V136z" fill="#a1836a" opacity=".9"/>
<path d="M84 187C86 176 93 170 102 170S118 176 120 187z" fill="#6e4e3c"/>
<circle cx="88" cy="139" r="7" fill="#cfccc4" stroke="#6f738c" stroke-width="2"/>
<rect x="157" y="104" width="11" height="86" fill="#56618a" opacity=".9"/>
<rect x="50" y="135" width="5" height="55" fill="#454b70"/>
<rect x="111" y="128" width="4" height="60" fill="#646b8e" opacity=".8"/>
<rect x="2" y="100" width="4" height="60" fill="#8790ac" opacity=".7"/>
<rect x="84.6" y="102.8" width="2.2" height="36.4" fill="#a9a38f" opacity=".55"/>
<rect x="35.5" y="134.5" width="2.4" height="34.8" fill="#a9a38f" opacity=".55"/>
<rect x="17.6" y="69.4" width="2.3" height="37.3" fill="#e8e3d8" opacity=".55"/>
<rect x="118.6" y="107.4" width="2.9" height="31.3" fill="#a9a38f" opacity=".55"/>
<rect x="115.1" y="50.5" width="2.7" height="16.6" fill="#e8e3d8" opacity=".55"/>
<rect x="6.7" y="144.3" width="1.5" height="26.6" fill="#7a809c" opacity=".55"/>
<rect x="82.4" y="139.5" width="1.9" height="22.4" fill="#7a809c" opacity=".55"/>
<rect x="0.9" y="41.0" width="2.1" height="28.8" fill="#8d94ad" opacity=".55"/>
<rect x="174.2" y="40.8" width="2.0" height="20.7" fill="#8d94ad" opacity=".55"/>
<rect x="54.1" y="39.1" width="2.1" height="36.2" fill="#e8e3d8" opacity=".55"/>
<rect x="72.3" y="154.5" width="1.8" height="38.2" fill="#e8e3d8" opacity=".55"/>
<rect x="9.8" y="78.8" width="2.1" height="29.2" fill="#a9a38f" opacity=".55"/>
<rect x="37.1" y="117.7" width="1.6" height="23.3" fill="#8d94ad" opacity=".55"/>
<rect x="180.3" y="128.5" width="1.7" height="32.7" fill="#e8e3d8" opacity=".55"/>
<rect x="2.0" y="90.4" width="1.8" height="29.0" fill="#a9a38f" opacity=".55"/>
<rect x="83.7" y="54.8" width="2.1" height="24.6" fill="#8d94ad" opacity=".55"/>
<rect x="73.8" y="158.7" width="1.9" height="39.3" fill="#e8e3d8" opacity=".55"/>
<rect x="150.2" y="69.5" width="1.8" height="24.9" fill="#e8e3d8" opacity=".55"/>
<rect x="159.8" y="113.4" width="1.6" height="18.7" fill="#e8e3d8" opacity=".55"/>
<rect x="114.1" y="137.9" width="1.6" height="17.3" fill="#a9a38f" opacity=".55"/>
<rect x="109.0" y="61.6" width="2.1" height="30.6" fill="#7a809c" opacity=".55"/>
<rect x="23.8" y="106.3" width="1.7" height="24.7" fill="#7a809c" opacity=".55"/>
<rect x="117.3" y="70.4" width="2.7" height="21.2" fill="#8d94ad" opacity=".55"/>
<rect x="35.5" y="126.1" width="1.8" height="38.8" fill="#7a809c" opacity=".55"/>
<rect x="165.0" y="108.5" width="1.6" height="17.7" fill="#a9a38f" opacity=".55"/>
<rect x="95.8" y="63.2" width="1.9" height="35.6" fill="#a9a38f" opacity=".55"/>
<rect x="111.5" y="68.1" width="2.9" height="39.4" fill="#8d94ad" opacity=".55"/>
<rect x="23.6" y="92.3" width="2.4" height="22.0" fill="#7a809c" opacity=".55"/>
<rect x="171.5" y="56.5" width="1.6" height="25.3" fill="#e8e3d8" opacity=".55"/>
<rect x="46.6" y="36.1" width="2.1" height="29.3" fill="#8d94ad" opacity=".55"/>
<rect x="24.6" y="77.1" width="3.0" height="31.4" fill="#a9a38f" opacity=".55"/>
<rect x="129.3" y="106.0" width="2.4" height="38.1" fill="#8d94ad" opacity=".55"/>
<rect x="88.8" y="76.5" width="2.9" height="15.5" fill="#8d94ad" opacity=".55"/>
<rect x="119.0" y="92.7" width="2.0" height="40.0" fill="#8d94ad" opacity=".55"/>
<rect x="14.1" y="101.0" width="2.9" height="33.4" fill="#e8e3d8" opacity=".55"/>
<rect x="131.6" y="133.1" width="2.0" height="32.1" fill="#8d94ad" opacity=".55"/>
<rect x="168.5" y="143.2" width="2.9" height="15.8" fill="#a9a38f" opacity=".55"/>
<rect x="123.8" y="79.3" width="2.4" height="17.0" fill="#e8e3d8" opacity=".55"/>
<rect x="118.8" y="185.7" width="2.4" height="4.6" fill="#8a91ab" opacity="0.61"/>
<rect x="107.8" y="81.3" width="1.3" height="6.6" fill="#b8ab8c" opacity="0.36"/>
<rect x="111.6" y="88.9" width="2.7" height="3.1" fill="#8a91ab" opacity="0.62"/>
<rect x="122.8" y="89.9" width="1.8" height="3.3" fill="#e6e0d2" opacity="0.56"/>
<rect x="96.0" y="140.5" width="2.3" height="4.9" fill="#8a91ab" opacity="0.66"/>
<rect x="59.8" y="123.9" width="2.2" height="6.9" fill="#8a91ab" opacity="0.61"/>
<rect x="35.9" y="38.5" width="2.1" height="4.2" fill="#8a91ab" opacity="0.40"/>
<rect x="91.8" y="156.2" width="2.3" height="7.7" fill="#e6e0d2" opacity="0.45"/>
<rect x="30.0" y="83.2" width="2.7" height="7.1" fill="#8a91ab" opacity="0.48"/>
<rect x="96.3" y="125.0" width="2.5" height="7.9" fill="#efebe2" opacity="0.51"/>
<rect x="12.1" y="4.0" width="1.3" height="6.4" fill="#626c90" opacity="0.55"/>
<rect x="56.4" y="147.6" width="2.2" height="4.7" fill="#e6e0d2" opacity="0.42"/>
<rect x="143.4" y="48.4" width="1.4" height="2.8" fill="#a68f7a" opacity="0.57"/>
<rect x="82.4" y="117.1" width="2.2" height="4.5" fill="#626c90" opacity="0.38"/>
<rect x="35.4" y="153.7" width="1.5" height="2.6" fill="#8a91ab" opacity="0.52"/>
<rect x="133.0" y="31.8" width="2.4" height="5.5" fill="#8a91ab" opacity="0.68"/>
<rect x="92.6" y="186.4" width="1.8" height="6.9" fill="#8a91ab" opacity="0.67"/>
<rect x="14.5" y="174.3" width="1.8" height="5.0" fill="#efebe2" opacity="0.42"/>
<rect x="165.7" y="-0.7" width="2.1" height="7.3" fill="#b8ab8c" opacity="0.63"/>
<rect x="176.5" y="85.6" width="2.8" height="3.0" fill="#626c90" opacity="0.65"/>
<rect x="148.9" y="172.7" width="1.5" height="7.4" fill="#e6e0d2" opacity="0.69"/>
<rect x="182.7" y="99.5" width="2.7" height="3.9" fill="#a68f7a" opacity="0.60"/>
<rect x="1.0" y="93.4" width="1.9" height="5.5" fill="#e6e0d2" opacity="0.62"/>
<rect x="10.1" y="149.2" width="2.1" height="6.3" fill="#8a91ab" opacity="0.67"/>
<rect x="86.9" y="187.0" width="2.0" height="6.2" fill="#efebe2" opacity="0.50"/>
<rect x="164.3" y="107.4" width="1.3" height="3.7" fill="#efebe2" opacity="0.53"/>
<rect x="52.8" y="135.8" width="1.5" height="5.3" fill="#626c90" opacity="0.67"/>
<rect x="46.5" y="124.9" width="1.5" height="7.2" fill="#626c90" opacity="0.69"/>
<rect x="97.1" y="106.3" width="1.9" height="3.1" fill="#8a91ab" opacity="0.35"/>
<rect x="69.3" y="99.7" width="2.0" height="4.7" fill="#e6e0d2" opacity="0.63"/>
<rect x="104.4" y="90.8" width="1.5" height="7.6" fill="#efebe2" opacity="0.51"/>
<rect x="172.0" y="149.3" width="1.6" height="5.1" fill="#8a91ab" opacity="0.39"/>
<rect x="80.0" y="152.2" width="2.0" height="3.1" fill="#b8ab8c" opacity="0.50"/>
<rect x="3.6" y="47.2" width="2.4" height="2.6" fill="#efebe2" opacity="0.42"/>
<rect x="41.0" y="127.8" width="2.4" height="3.8" fill="#8a91ab" opacity="0.52"/>
<rect x="92.4" y="108.0" width="2.2" height="6.4" fill="#b8ab8c" opacity="0.60"/>
<rect x="164.1" y="2.4" width="1.9" height="5.4" fill="#626c90" opacity="0.41"/>
<rect x="36.6" y="117.3" width="1.5" height="3.7" fill="#626c90" opacity="0.54"/>
<rect x="116.7" y="63.7" width="1.7" height="4.2" fill="#8a91ab" opacity="0.67"/>
<rect x="39.2" y="186.7" width="1.4" height="3.8" fill="#e6e0d2" opacity="0.60"/>
<rect x="47.0" y="16.3" width="2.1" height="6.4" fill="#8a91ab" opacity="0.42"/>
<rect x="116.7" y="149.0" width="1.5" height="6.3" fill="#e6e0d2" opacity="0.67"/>
<rect x="181.0" y="19.8" width="2.2" height="4.4" fill="#b8ab8c" opacity="0.70"/>
<rect x="155.4" y="149.7" width="1.4" height="2.7" fill="#b8ab8c" opacity="0.54"/>
<rect x="95.3" y="105.5" width="1.5" height="3.1" fill="#8a91ab" opacity="0.41"/>
<rect x="27.9" y="51.5" width="1.4" height="2.8" fill="#626c90" opacity="0.68"/>
<rect x="85.3" y="142.5" width="1.8" height="4.8" fill="#8a91ab" opacity="0.47"/>
<rect x="37.7" y="68.5" width="2.3" height="7.1" fill="#626c90" opacity="0.41"/>
<rect x="83.8" y="137.7" width="2.7" height="5.8" fill="#8a91ab" opacity="0.38"/>
<rect x="147.8" y="59.2" width="2.5" height="6.4" fill="#e6e0d2" opacity="0.65"/>
<rect x="117.0" y="74.5" width="1.5" height="5.7" fill="#626c90" opacity="0.47"/>
<rect x="142.1" y="50.8" width="2.4" height="6.8" fill="#e6e0d2" opacity="0.64"/>
<rect x="74.7" y="167.4" width="2.3" height="6.7" fill="#b8ab8c" opacity="0.62"/>
<rect x="74.7" y="134.6" width="2.5" height="4.2" fill="#e6e0d2" opacity="0.39"/>
<rect x="165.8" y="185.2" width="1.3" height="4.0" fill="#626c90" opacity="0.69"/>
<rect x="54.5" y="38.8" width="2.1" height="5.4" fill="#8a91ab" opacity="0.49"/>
<rect x="187.0" y="119.4" width="1.4" height="4.7" fill="#efebe2" opacity="0.55"/>
<rect x="19.7" y="18.4" width="1.6" height="4.7" fill="#8a91ab" opacity="0.37"/>
<rect x="34.9" y="69.0" width="1.6" height="4.0" fill="#e6e0d2" opacity="0.47"/>
<rect x="100.2" y="76.6" width="2.1" height="8.0" fill="#b8ab8c" opacity="0.57"/>
<rect x="141.5" y="6.5" width="1.8" height="7.8" fill="#8a91ab" opacity="0.65"/>
<rect x="100.4" y="110.8" width="2.7" height="4.8" fill="#8a91ab" opacity="0.53"/>
<rect x="111.0" y="67.1" width="2.0" height="4.0" fill="#8a91ab" opacity="0.68"/>
<rect x="123.4" y="139.3" width="1.2" height="3.8" fill="#e6e0d2" opacity="0.36"/>
<rect x="27.6" y="140.6" width="1.3" height="4.2" fill="#8a91ab" opacity="0.49"/>
<rect x="108.0" y="134.7" width="1.3" height="7.5" fill="#8a91ab" opacity="0.50"/>
<rect x="88.3" y="181.9" width="1.3" height="3.0" fill="#8a91ab" opacity="0.63"/>
<rect x="169.9" y="25.3" width="2.2" height="3.1" fill="#8a91ab" opacity="0.57"/>
<rect x="84.1" y="36.5" width="1.8" height="3.4" fill="#e6e0d2" opacity="0.48"/>
<rect x="24.4" y="76.8" width="1.6" height="5.7" fill="#626c90" opacity="0.50"/>
<rect x="145.0" y="98.3" width="2.7" height="6.5" fill="#8a91ab" opacity="0.43"/>
<rect x="19.5" y="166.7" width="2.0" height="7.2" fill="#a68f7a" opacity="0.45"/>
<rect x="113.3" y="135.0" width="2.1" height="6.0" fill="#efebe2" opacity="0.61"/>
<rect x="33.9" y="45.1" width="2.7" height="7.3" fill="#626c90" opacity="0.36"/>
<rect x="9.5" y="49.2" width="1.2" height="2.7" fill="#8a91ab" opacity="0.43"/>
<rect x="50.6" y="140.8" width="1.5" height="3.8" fill="#626c90" opacity="0.69"/>
<rect x="89.5" y="64.9" width="1.7" height="6.6" fill="#8a91ab" opacity="0.64"/>
<rect x="12.1" y="20.6" width="2.5" height="7.1" fill="#a68f7a" opacity="0.62"/>
<rect x="82.0" y="139.2" width="2.5" height="4.5" fill="#8a91ab" opacity="0.58"/>
<rect x="185.0" y="59.5" width="2.4" height="7.0" fill="#b8ab8c" opacity="0.41"/>
<rect x="121.6" y="107.7" width="2.6" height="2.9" fill="#b8ab8c" opacity="0.38"/>
<rect x="104.6" y="89.6" width="1.9" height="7.0" fill="#626c90" opacity="0.35"/>
<rect x="56.6" y="170.1" width="1.3" height="4.2" fill="#626c90" opacity="0.60"/>
<rect x="129.2" y="51.5" width="1.6" height="6.1" fill="#8a91ab" opacity="0.46"/>
<rect x="169.3" y="58.9" width="2.1" height="7.6" fill="#b8ab8c" opacity="0.68"/>
<rect x="170.6" y="80.8" width="2.8" height="5.0" fill="#a68f7a" opacity="0.43"/>
<rect x="180.9" y="135.9" width="1.6" height="4.5" fill="#b8ab8c" opacity="0.48"/>
<rect x="66.7" y="72.8" width="2.5" height="6.6" fill="#8a91ab" opacity="0.48"/>
<rect x="31.5" y="15.0" width="2.6" height="4.0" fill="#b8ab8c" opacity="0.36"/>
<rect x="95.5" y="100.8" width="1.7" height="2.6" fill="#626c90" opacity="0.64"/>
<rect x="77.9" y="108.0" width="2.5" height="3.0" fill="#8a91ab" opacity="0.38"/>
<rect x="137.3" y="167.9" width="1.2" height="6.1" fill="#e6e0d2" opacity="0.38"/>
<rect x="152.3" y="77.8" width="1.6" height="6.7" fill="#efebe2" opacity="0.53"/>
<rect x="142.5" y="72.5" width="2.5" height="4.3" fill="#8a91ab" opacity="0.40"/>
<rect x="90.2" y="150.1" width="2.3" height="7.5" fill="#e6e0d2" opacity="0.49"/>
<rect x="154.2" y="124.0" width="2.5" height="7.1" fill="#e6e0d2" opacity="0.66"/>
<rect x="179.0" y="119.0" width="1.8" height="2.6" fill="#b8ab8c" opacity="0.39"/>
<rect x="172.6" y="171.0" width="2.4" height="8.0" fill="#8a91ab" opacity="0.48"/>
<rect x="29.7" y="36.6" width="2.0" height="4.0" fill="#8a91ab" opacity="0.66"/>
<rect x="87.1" y="136.1" width="2.2" height="6.8" fill="#8a91ab" opacity="0.41"/>
<rect x="9.8" y="84.7" width="2.0" height="6.9" fill="#626c90" opacity="0.46"/>
<rect x="35.4" y="65.9" width="1.6" height="6.4" fill="#626c90" opacity="0.56"/>
<rect x="40.3" y="33.0" width="1.8" height="7.5" fill="#8a91ab" opacity="0.68"/>
<rect x="116.5" y="176.0" width="2.0" height="3.9" fill="#b8ab8c" opacity="0.66"/>
<rect x="170.8" y="62.7" width="2.4" height="3.0" fill="#b8ab8c" opacity="0.65"/>
<rect x="73.5" y="39.1" width="2.5" height="4.6" fill="#8a91ab" opacity="0.53"/>
<rect x="95.5" y="49.9" width="2.3" height="3.8" fill="#e6e0d2" opacity="0.35"/>
<rect x="87.3" y="68.2" width="1.6" height="4.8" fill="#a68f7a" opacity="0.66"/>
<rect x="76.6" y="143.9" width="1.6" height="7.3" fill="#8a91ab" opacity="0.53"/>
<rect x="118.4" y="185.7" width="2.0" height="2.8" fill="#8a91ab" opacity="0.55"/>
<rect x="31.7" y="36.6" width="2.5" height="3.0" fill="#8a91ab" opacity="0.44"/>
<rect x="86.6" y="178.6" width="2.1" height="5.3" fill="#626c90" opacity="0.36"/>
<rect x="33.5" y="34.5" width="1.3" height="7.0" fill="#626c90" opacity="0.42"/>
<rect x="100.7" y="97.4" width="2.7" height="7.8" fill="#8a91ab" opacity="0.46"/>
<rect x="74.6" y="103.2" width="2.3" height="2.9" fill="#b8ab8c" opacity="0.38"/>
<rect x="24.6" y="124.2" width="1.9" height="7.8" fill="#626c90" opacity="0.64"/>
<rect x="132.2" y="42.9" width="1.4" height="6.7" fill="#626c90" opacity="0.65"/>
<rect x="157.6" y="133.9" width="1.4" height="6.0" fill="#626c90" opacity="0.68"/>
<rect x="139.7" y="178.3" width="1.8" height="6.2" fill="#a68f7a" opacity="0.44"/>
<rect x="35.8" y="136.2" width="1.7" height="4.0" fill="#8a91ab" opacity="0.51"/>
<rect x="119.0" y="82.5" width="1.3" height="3.3" fill="#8a91ab" opacity="0.38"/>
<rect x="126.1" y="131.9" width="1.5" height="2.7" fill="#8a91ab" opacity="0.51"/>
<rect x="184.6" y="80.0" width="1.3" height="7.6" fill="#a68f7a" opacity="0.50"/>
<rect x="94.7" y="120.3" width="1.4" height="6.3" fill="#a68f7a" opacity="0.52"/>
<rect x="172.1" y="115.8" width="1.8" height="6.3" fill="#efebe2" opacity="0.69"/>
<rect x="147.2" y="122.8" width="2.0" height="3.9" fill="#626c90" opacity="0.42"/>
<rect x="56.0" y="81.4" width="1.8" height="5.3" fill="#b8ab8c" opacity="0.63"/>
<rect x="154.0" y="113.6" width="1.6" height="5.5" fill="#8a91ab" opacity="0.45"/>
<rect x="42.2" y="113.7" width="1.4" height="6.4" fill="#b8ab8c" opacity="0.70"/>
<rect x="95.5" y="133.2" width="2.1" height="2.6" fill="#8a91ab" opacity="0.58"/>
<rect x="76.9" y="61.0" width="2.7" height="4.5" fill="#e6e0d2" opacity="0.51"/>
<rect x="21.4" y="182.0" width="1.6" height="5.6" fill="#8a91ab" opacity="0.54"/>
<rect x="10.0" y="171.0" width="2.7" height="8.0" fill="#8a91ab" opacity="0.64"/>
<rect x="52.5" y="167.5" width="2.4" height="4.5" fill="#8a91ab" opacity="0.41"/>
<rect x="110.9" y="151.3" width="1.3" height="3.5" fill="#b8ab8c" opacity="0.70"/>
<rect x="175.6" y="122.4" width="2.4" height="7.2" fill="#8a91ab" opacity="0.67"/>
<rect x="114.3" y="119.0" width="1.2" height="3.6" fill="#a68f7a" opacity="0.51"/>
<rect x="25.0" y="71.0" width="1.8" height="4.3" fill="#626c90" opacity="0.40"/>
<rect x="44.1" y="174.1" width="2.2" height="2.7" fill="#e6e0d2" opacity="0.58"/>
<rect x="25.4" y="179.3" width="1.4" height="4.4" fill="#626c90" opacity="0.66"/>
<rect x="170.6" y="104.7" width="2.4" height="5.2" fill="#8a91ab" opacity="0.70"/>
<rect x="156.4" y="159.6" width="2.5" height="3.1" fill="#8a91ab" opacity="0.39"/>
<rect x="175.5" y="60.4" width="1.9" height="7.5" fill="#b8ab8c" opacity="0.46"/>
<rect x="8.3" y="135.1" width="2.4" height="5.8" fill="#8a91ab" opacity="0.61"/>
<rect x="55.6" y="110.2" width="1.6" height="7.1" fill="#e6e0d2" opacity="0.43"/>
<rect x="163.0" y="181.8" width="2.3" height="5.4" fill="#b8ab8c" opacity="0.43"/>
<rect x="55.9" y="72.8" width="2.6" height="8.0" fill="#8a91ab" opacity="0.61"/>
<rect x="162.7" y="67.7" width="1.9" height="6.9" fill="#b8ab8c" opacity="0.43"/>
<rect x="139.1" y="105.1" width="1.4" height="6.9" fill="#e6e0d2" opacity="0.39"/>
<rect x="99.6" y="177.7" width="1.7" height="6.5" fill="#e6e0d2" opacity="0.36"/>
<rect x="30.5" y="81.3" width="2.5" height="4.7" fill="#b8ab8c" opacity="0.47"/>
<rect x="167.8" y="56.2" width="1.4" height="6.8" fill="#b8ab8c" opacity="0.62"/>
<rect x="164.1" y="36.3" width="2.6" height="3.6" fill="#efebe2" opacity="0.64"/>
<rect x="64.9" y="87.3" width="2.2" height="6.3" fill="#8a91ab" opacity="0.55"/>
<rect x="98.8" y="42.6" width="2.2" height="4.2" fill="#e6e0d2" opacity="0.64"/>
<rect x="179.7" y="49.8" width="2.3" height="3.2" fill="#8a91ab" opacity="0.59"/>
<rect x="175.2" y="82.1" width="1.5" height="7.2" fill="#e6e0d2" opacity="0.39"/>
<rect x="128.6" y="48.8" width="1.6" height="6.2" fill="#efebe2" opacity="0.63"/>
<rect x="68.4" y="123.1" width="2.1" height="3.8" fill="#e6e0d2" opacity="0.46"/>
<rect x="173.2" y="124.1" width="1.4" height="6.2" fill="#8a91ab" opacity="0.51"/>
<rect x="12.4" y="171.3" width="2.0" height="2.7" fill="#e6e0d2" opacity="0.56"/>
<rect x="51.8" y="45.4" width="2.1" height="3.4" fill="#a68f7a" opacity="0.70"/>
<rect x="33.8" y="31.9" width="2.1" height="3.5" fill="#efebe2" opacity="0.66"/>
<rect x="184.7" y="4.4" width="2.7" height="5.7" fill="#b8ab8c" opacity="0.35"/>
<rect x="166.5" y="9.4" width="2.1" height="6.0" fill="#e6e0d2" opacity="0.48"/>
<rect x="122.4" y="146.0" width="1.7" height="7.0" fill="#b8ab8c" opacity="0.57"/>
<rect x="183.9" y="138.7" width="1.5" height="6.8" fill="#b8ab8c" opacity="0.41"/>
<rect x="112.9" y="42.5" width="2.1" height="3.9" fill="#b8ab8c" opacity="0.60"/>
<rect x="134.4" y="47.1" width="1.6" height="5.7" fill="#b8ab8c" opacity="0.52"/>
<rect x="4.7" y="110.8" width="1.3" height="5.0" fill="#efebe2" opacity="0.66"/>
<rect x="59.4" y="113.0" width="2.0" height="4.9" fill="#626c90" opacity="0.50"/>
<rect x="47.7" y="148.9" width="1.4" height="3.5" fill="#e6e0d2" opacity="0.57"/>
<rect x="107.5" y="134.5" width="1.4" height="4.2" fill="#626c90" opacity="0.36"/>
<rect x="57.4" y="115.4" width="2.4" height="6.7" fill="#b8ab8c" opacity="0.52"/>
<rect x="120.9" y="94.5" width="1.6" height="3.4" fill="#8a91ab" opacity="0.59"/>
<rect x="155.0" y="146.7" width="1.7" height="5.1" fill="#e6e0d2" opacity="0.59"/>
<rect x="131.0" y="178.9" width="2.0" height="6.7" fill="#8a91ab" opacity="0.70"/>
<rect x="25.3" y="84.1" width="2.8" height="2.5" fill="#efebe2" opacity="0.49"/>
<rect x="87.2" y="174.8" width="2.3" height="6.4" fill="#e6e0d2" opacity="0.69"/>
<rect x="113.8" y="53.9" width="2.1" height="3.8" fill="#e6e0d2" opacity="0.51"/>
<rect x="174.2" y="66.8" width="2.7" height="7.6" fill="#8a91ab" opacity="0.43"/>
<rect x="28.3" y="108.6" width="2.4" height="5.6" fill="#e6e0d2" opacity="0.67"/>
<rect x="165.2" y="172.6" width="1.9" height="4.7" fill="#8a91ab" opacity="0.65"/>
<rect x="70.0" y="145.7" width="1.9" height="3.9" fill="#8a91ab" opacity="0.63"/>
<rect x="150.0" y="88.8" width="1.5" height="5.1" fill="#8a91ab" opacity="0.46"/>
<rect x="82.5" y="185.7" width="1.5" height="5.2" fill="#626c90" opacity="0.54"/>
<rect x="177.3" y="115.4" width="1.5" height="3.9" fill="#b8ab8c" opacity="0.49"/>
<rect x="172.6" y="133.2" width="1.4" height="2.8" fill="#8a91ab" opacity="0.60"/>
<rect x="156.6" y="20.5" width="1.9" height="7.2" fill="#8a91ab" opacity="0.48"/>
<rect x="46.4" y="164.1" width="1.3" height="4.7" fill="#626c90" opacity="0.43"/>
<rect x="5.7" y="26.5" width="1.4" height="3.6" fill="#626c90" opacity="0.49"/>
<rect x="88.5" y="129.2" width="2.3" height="3.9" fill="#b8ab8c" opacity="0.60"/>
<rect x="51.0" y="132.7" width="1.4" height="5.3" fill="#8a91ab" opacity="0.47"/>
<rect x="17.4" y="68.0" width="1.5" height="2.7" fill="#626c90" opacity="0.36"/>
<rect x="117.1" y="105.0" width="2.4" height="6.6" fill="#a68f7a" opacity="0.58"/>
<rect x="10.6" y="159.2" width="2.3" height="6.2" fill="#b8ab8c" opacity="0.68"/>
<rect x="162.1" y="42.3" width="1.6" height="6.9" fill="#626c90" opacity="0.39"/>
<rect x="91.2" y="90.6" width="1.7" height="6.4" fill="#8a91ab" opacity="0.43"/>
<rect x="172.9" y="36.2" width="1.5" height="6.2" fill="#a68f7a" opacity="0.43"/>
<rect x="15.6" y="62.6" width="2.5" height="5.1" fill="#8a91ab" opacity="0.44"/>
<rect x="159.2" y="56.3" width="2.6" height="3.2" fill="#e6e0d2" opacity="0.67"/>
<rect x="170.4" y="49.4" width="2.0" height="5.7" fill="#8a91ab" opacity="0.51"/>
<rect x="59.5" y="45.9" width="1.3" height="4.3" fill="#e6e0d2" opacity="0.48"/>
<rect x="54.2" y="152.1" width="2.2" height="4.6" fill="#8a91ab" opacity="0.47"/>
<rect x="167.7" y="3.9" width="2.7" height="6.7" fill="#efebe2" opacity="0.57"/>
<rect x="115.3" y="75.7" width="1.3" height="2.9" fill="#8a91ab" opacity="0.51"/>
<rect x="83.0" y="180.6" width="1.3" height="3.2" fill="#8a91ab" opacity="0.53"/>
<rect x="56.3" y="66.1" width="1.4" height="3.6" fill="#e6e0d2" opacity="0.43"/>
<rect x="126.6" y="42.3" width="2.7" height="7.9" fill="#e6e0d2" opacity="0.35"/>
<rect x="101.4" y="158.5" width="2.1" height="5.9" fill="#a68f7a" opacity="0.55"/>
<rect x="155.1" y="181.1" width="1.6" height="3.1" fill="#8a91ab" opacity="0.36"/>
<rect x="150.3" y="37.3" width="2.3" height="7.8" fill="#8a91ab" opacity="0.64"/>
<rect x="28.1" y="115.5" width="2.5" height="4.1" fill="#b8ab8c" opacity="0.50"/>
<rect x="67.3" y="124.3" width="1.6" height="3.9" fill="#b8ab8c" opacity="0.46"/>
<rect x="31.6" y="95.1" width="2.6" height="7.9" fill="#8a91ab" opacity="0.64"/>
<rect x="165.4" y="56.6" width="2.0" height="6.2" fill="#b8ab8c" opacity="0.36"/>
<rect x="115.5" y="76.0" width="1.3" height="3.9" fill="#b8ab8c" opacity="0.53"/>
<rect x="148.5" y="72.1" width="2.2" height="4.5" fill="#efebe2" opacity="0.59"/>
<rect x="32.7" y="159.8" width="2.5" height="7.1" fill="#8a91ab" opacity="0.55"/>
<rect x="77.5" y="131.6" width="2.4" height="4.0" fill="#626c90" opacity="0.41"/>
<rect x="36.0" y="115.4" width="1.6" height="3.5" fill="#8a91ab" opacity="0.35"/>
<rect x="108.7" y="175.8" width="1.6" height="4.0" fill="#8a91ab" opacity="0.44"/>
<rect x="123.8" y="71.1" width="2.8" height="2.8" fill="#626c90" opacity="0.60"/>
<rect x="20.4" y="6.0" width="1.8" height="5.5" fill="#8a91ab" opacity="0.63"/>
<rect x="74.5" y="169.0" width="2.6" height="3.4" fill="#b8ab8c" opacity="0.37"/>
<rect x="80.9" y="162.4" width="1.7" height="4.7" fill="#626c90" opacity="0.57"/>
<rect x="142.7" y="183.4" width="2.3" height="3.7" fill="#8a91ab" opacity="0.45"/>
<rect x="161.8" y="81.6" width="2.1" height="7.4" fill="#e6e0d2" opacity="0.66"/>
<rect x="49.1" y="105.5" width="2.2" height="4.0" fill="#8a91ab" opacity="0.43"/>
<rect x="89.1" y="67.1" width="2.1" height="3.3" fill="#8a91ab" opacity="0.35"/>
<rect x="141.8" y="124.7" width="1.5" height="5.2" fill="#e6e0d2" opacity="0.70"/>
<rect x="36.2" y="161.9" width="1.3" height="4.4" fill="#b8ab8c" opacity="0.55"/>
<rect x="103.3" y="38.6" width="2.3" height="5.9" fill="#626c90" opacity="0.45"/>
<rect x="175.4" y="161.4" width="1.9" height="7.1" fill="#a68f7a" opacity="0.60"/>
<rect x="31.2" y="3.1" width="2.1" height="6.2" fill="#8a91ab" opacity="0.44"/>
<rect x="2.5" y="103.0" width="2.0" height="2.6" fill="#e6e0d2" opacity="0.42"/>
<rect x="179.3" y="0.1" width="1.6" height="3.8" fill="#b8ab8c" opacity="0.67"/>
<rect x="91.6" y="56.2" width="2.5" height="6.7" fill="#b8ab8c" opacity="0.70"/>
<rect x="17.1" y="177.6" width="2.5" height="4.7" fill="#8a91ab" opacity="0.66"/>
<rect x="59.2" y="134.9" width="2.3" height="7.0" fill="#b8ab8c" opacity="0.48"/>
<rect x="118.6" y="64.9" width="1.3" height="6.1" fill="#8a91ab" opacity="0.56"/>
<rect x="48.0" y="38.4" width="1.5" height="6.6" fill="#8a91ab" opacity="0.54"/>
<rect x="126.6" y="31.5" width="1.4" height="4.6" fill="#e6e0d2" opacity="0.41"/>
<rect x="2.2" y="73.5" width="1.8" height="4.3" fill="#e6e0d2" opacity="0.54"/>
<rect x="178.0" y="36.7" width="1.7" height="6.6" fill="#8a91ab" opacity="0.39"/>
<rect x="184.6" y="79.3" width="2.0" height="6.8" fill="#8a91ab" opacity="0.66"/>
<rect x="172.0" y="164.6" width="1.8" height="7.9" fill="#a68f7a" opacity="0.40"/>
<rect x="118.0" y="69.5" width="1.3" height="5.9" fill="#626c90" opacity="0.47"/>
<rect x="81.1" y="133.0" width="2.0" height="5.6" fill="#8a91ab" opacity="0.39"/>
<rect x="156.3" y="128.4" width="1.9" height="5.1" fill="#b8ab8c" opacity="0.64"/>
<rect x="92.8" y="69.0" width="2.1" height="5.3" fill="#b8ab8c" opacity="0.36"/>
<rect x="116.6" y="82.4" width="1.3" height="2.8" fill="#626c90" opacity="0.46"/>
<rect x="99.5" y="60.0" width="2.4" height="4.2" fill="#8a91ab" opacity="0.61"/>
<rect x="185.0" y="74.0" width="2.4" height="7.4" fill="#8a91ab" opacity="0.39"/>
<rect x="33.3" y="172.6" width="2.7" height="7.1" fill="#a68f7a" opacity="0.63"/>
<rect x="94.7" y="185.8" width="1.5" height="2.7" fill="#e6e0d2" opacity="0.47"/>
<rect x="95.8" y="63.9" width="2.1" height="7.3" fill="#8a91ab" opacity="0.42"/>
<rect x="50.8" y="119.7" width="1.4" height="4.9" fill="#e6e0d2" opacity="0.61"/>
<rect x="163.7" y="11.6" width="2.6" height="6.7" fill="#b8ab8c" opacity="0.54"/>
<rect x="169.2" y="148.6" width="2.5" height="3.5" fill="#8a91ab" opacity="0.47"/>
<rect x="173.6" y="178.5" width="2.5" height="3.1" fill="#8a91ab" opacity="0.41"/>
<rect x="71.5" y="158.5" width="1.9" height="5.2" fill="#626c90" opacity="0.38"/>
<rect x="120.7" y="98.6" width="2.6" height="6.5" fill="#8a91ab" opacity="0.42"/>
<rect x="124.3" y="79.4" width="2.5" height="6.3" fill="#e6e0d2" opacity="0.65"/>
<rect x="176.8" y="122.4" width="2.3" height="3.5" fill="#8a91ab" opacity="0.39"/>
<rect x="129.1" y="86.2" width="1.6" height="3.9" fill="#8a91ab" opacity="0.47"/>
<rect x="115.7" y="56.1" width="2.8" height="6.3" fill="#e6e0d2" opacity="0.61"/>
<rect x="66.1" y="56.6" width="1.5" height="2.9" fill="#8a91ab" opacity="0.44"/>
<rect x="68.8" y="113.8" width="1.9" height="5.3" fill="#8a91ab" opacity="0.68"/>
<rect x="63.5" y="131.0" width="2.0" height="3.1" fill="#8a91ab" opacity="0.39"/>
<rect x="163.7" y="177.9" width="2.3" height="5.0" fill="#e6e0d2" opacity="0.68"/>
<rect x="71.3" y="138.5" width="1.6" height="6.0" fill="#626c90" opacity="0.48"/>
<rect x="61.0" y="108.4" width="2.7" height="4.1" fill="#626c90" opacity="0.59"/>
<rect x="125.0" y="44.3" width="1.8" height="5.8" fill="#8a91ab" opacity="0.65"/>
<rect x="71.3" y="50.6" width="2.5" height="7.2" fill="#e6e0d2" opacity="0.56"/>
<rect x="14.7" y="66.7" width="1.2" height="5.7" fill="#8a91ab" opacity="0.59"/>
<rect x="185.1" y="152.2" width="2.3" height="3.4" fill="#e6e0d2" opacity="0.38"/>
<rect x="30.2" y="93.6" width="2.3" height="5.8" fill="#b8ab8c" opacity="0.69"/>
<rect x="182.6" y="185.6" width="1.9" height="3.8" fill="#8a91ab" opacity="0.54"/>
<rect x="18.8" y="8.9" width="2.2" height="6.8" fill="#b8ab8c" opacity="0.68"/>
<rect x="95.9" y="108.4" width="1.8" height="3.3" fill="#b8ab8c" opacity="0.49"/>
<rect x="120.7" y="115.7" width="2.6" height="6.1" fill="#efebe2" opacity="0.69"/>
<rect x="87.5" y="165.1" width="1.9" height="2.6" fill="#8a91ab" opacity="0.65"/>
<rect x="176.5" y="167.3" width="1.4" height="4.8" fill="#e6e0d2" opacity="0.55"/>
<rect x="182.2" y="144.7" width="1.7" height="5.3" fill="#e6e0d2" opacity="0.39"/>
<rect x="94.8" y="53.6" width="1.6" height="5.7" fill="#a68f7a" opacity="0.51"/>
<rect x="185.1" y="109.3" width="2.1" height="5.0" fill="#8a91ab" opacity="0.65"/>
<rect x="17.7" y="158.7" width="1.4" height="5.6" fill="#8a91ab" opacity="0.41"/>
<rect x="114.8" y="180.1" width="2.7" height="4.8" fill="#efebe2" opacity="0.35"/>
<rect x="27.1" y="152.7" width="2.4" height="4.6" fill="#efebe2" opacity="0.45"/>
<rect x="114.9" y="74.5" width="1.7" height="7.8" fill="#b8ab8c" opacity="0.58"/>
<rect x="158.2" y="6.7" width="1.7" height="3.7" fill="#8a91ab" opacity="0.54"/>
<rect x="122.2" y="77.2" width="1.5" height="8.0" fill="#b8ab8c" opacity="0.55"/>
<rect x="24.1" y="183.5" width="1.8" height="4.1" fill="#e6e0d2" opacity="0.61"/>
<rect x="46.8" y="67.5" width="2.5" height="4.6" fill="#8a91ab" opacity="0.58"/>
<rect x="61.1" y="20.1" width="2.5" height="2.8" fill="#8a91ab" opacity="0.53"/>
<rect x="101.5" y="73.6" width="2.3" height="6.4" fill="#8a91ab" opacity="0.36"/>
<rect x="66.0" y="177.7" width="2.4" height="5.2" fill="#b8ab8c" opacity="0.35"/>
<rect x="74.8" y="180.6" width="2.3" height="4.5" fill="#e6e0d2" opacity="0.44"/>
<rect x="180.1" y="129.1" width="1.5" height="6.7" fill="#8a91ab" opacity="0.37"/>
<rect x="32.7" y="20.3" width="2.4" height="2.8" fill="#a68f7a" opacity="0.38"/>
<rect x="45.6" y="49.1" width="2.7" height="6.1" fill="#a68f7a" opacity="0.48"/>
<rect x="15.0" y="106.1" width="1.3" height="7.9" fill="#e6e0d2" opacity="0.64"/>
<rect x="60.0" y="58.0" width="2.5" height="6.0" fill="#8a91ab" opacity="0.37"/>
<rect x="102.3" y="173.3" width="2.3" height="5.9" fill="#626c90" opacity="0.59"/>
<rect x="38.0" y="101.4" width="2.0" height="4.3" fill="#efebe2" opacity="0.57"/>
<rect x="170.7" y="153.2" width="2.5" height="4.9" fill="#8a91ab" opacity="0.61"/>
<rect x="69.4" y="82.6" width="2.5" height="4.9" fill="#8a91ab" opacity="0.66"/>
<rect x="135.5" y="155.9" width="2.3" height="5.5" fill="#8a91ab" opacity="0.39"/>
<rect x="20.4" y="56.6" width="2.1" height="7.6" fill="#626c90" opacity="0.42"/>
<rect x="76.4" y="99.4" width="1.4" height="4.0" fill="#e6e0d2" opacity="0.49"/>
<rect x="167.5" y="173.9" width="2.3" height="7.6" fill="#8a91ab" opacity="0.52"/>
<rect x="128.3" y="71.3" width="2.0" height="5.5" fill="#a68f7a" opacity="0.65"/>
<rect x="144.1" y="59.2" width="1.8" height="3.4" fill="#e6e0d2" opacity="0.47"/>
<rect x="109.8" y="96.3" width="1.9" height="5.7" fill="#8a91ab" opacity="0.51"/>
<rect x="117.5" y="64.3" width="2.1" height="3.9" fill="#8a91ab" opacity="0.37"/>
<rect x="153.9" y="69.4" width="1.5" height="7.5" fill="#efebe2" opacity="0.37"/>
<rect x="32.0" y="76.2" width="1.9" height="5.2" fill="#b8ab8c" opacity="0.43"/>
<rect x="158.2" y="4.6" width="1.8" height="3.4" fill="#efebe2" opacity="0.52"/>
<rect x="90.5" y="82.4" width="1.8" height="4.2" fill="#a68f7a" opacity="0.44"/>
<rect x="27.5" y="184.4" width="2.4" height="4.4" fill="#b8ab8c" opacity="0.41"/>
<rect x="33.9" y="29.8" width="2.3" height="4.5" fill="#8a91ab" opacity="0.68"/>
<rect x="133.8" y="53.0" width="2.8" height="3.1" fill="#efebe2" opacity="0.48"/>
<rect x="30.6" y="166.1" width="1.7" height="3.9" fill="#626c90" opacity="0.40"/>
<rect x="89.6" y="49.5" width="2.5" height="7.7" fill="#8a91ab" opacity="0.40"/>
<rect x="71.6" y="153.3" width="2.6" height="5.9" fill="#b8ab8c" opacity="0.54"/>
<rect x="136.7" y="99.0" width="2.3" height="5.7" fill="#626c90" opacity="0.57"/>
<rect x="55.9" y="78.7" width="1.8" height="6.8" fill="#a68f7a" opacity="0.43"/>
<rect x="83.6" y="68.0" width="1.5" height="6.0" fill="#efebe2" opacity="0.44"/>
<rect x="135.3" y="165.4" width="2.7" height="3.1" fill="#e6e0d2" opacity="0.68"/>
<rect x="17.3" y="104.9" width="1.5" height="4.5" fill="#e6e0d2" opacity="0.47"/>
<rect x="24.6" y="177.4" width="1.3" height="2.7" fill="#626c90" opacity="0.55"/>
<rect x="183.8" y="127.5" width="2.7" height="5.5" fill="#a68f7a" opacity="0.50"/>
<rect x="113.8" y="172.9" width="1.4" height="3.3" fill="#efebe2" opacity="0.42"/>
<rect x="129.1" y="3.6" width="1.3" height="7.4" fill="#b8ab8c" opacity="0.44"/>
<rect x="39.5" y="49.5" width="2.8" height="7.7" fill="#8a91ab" opacity="0.67"/>
<rect x="160.3" y="174.7" width="2.2" height="6.9" fill="#e6e0d2" opacity="0.70"/>
<rect x="106.0" y="167.8" width="2.7" height="3.0" fill="#8a91ab" opacity="0.53"/>
<rect x="179.3" y="4.0" width="1.7" height="4.2" fill="#e6e0d2" opacity="0.70"/>
<rect x="112.3" y="158.0" width="2.4" height="6.9" fill="#a68f7a" opacity="0.35"/>
<rect x="10.8" y="148.1" width="2.5" height="4.7" fill="#8a91ab" opacity="0.47"/>
<rect x="47.6" y="108.7" width="2.4" height="5.4" fill="#b8ab8c" opacity="0.47"/>
<rect x="121.1" y="174.0" width="1.5" height="3.3" fill="#8a91ab" opacity="0.44"/>
<rect x="88.5" y="146.1" width="1.5" height="6.2" fill="#8a91ab" opacity="0.56"/>
<rect x="110.6" y="106.5" width="2.6" height="3.5" fill="#626c90" opacity="0.43"/>
<rect x="55.0" y="60.3" width="1.5" height="2.7" fill="#efebe2" opacity="0.44"/>
<rect x="15.5" y="127.4" width="1.6" height="3.7" fill="#b8ab8c" opacity="0.50"/>
<rect x="185.1" y="68.1" width="1.3" height="2.9" fill="#8a91ab" opacity="0.64"/>
<rect x="187.0" y="77.2" width="2.5" height="4.4" fill="#626c90" opacity="0.63"/>
<rect x="69.7" y="52.3" width="2.7" height="2.9" fill="#626c90" opacity="0.69"/>
<rect x="170.3" y="7.8" width="1.8" height="2.9" fill="#e6e0d2" opacity="0.67"/>
<rect x="25.1" y="36.9" width="2.7" height="7.6" fill="#b8ab8c" opacity="0.47"/>
<rect x="173.9" y="24.8" width="1.7" height="2.7" fill="#efebe2" opacity="0.43"/>
<rect x="130.6" y="42.8" width="2.6" height="6.2" fill="#efebe2" opacity="0.48"/>
<rect x="135.4" y="172.6" width="2.7" height="2.9" fill="#8a91ab" opacity="0.41"/>
<rect x="32.6" y="21.2" width="2.0" height="7.0" fill="#b8ab8c" opacity="0.50"/>
<rect x="149.9" y="47.5" width="1.3" height="3.7" fill="#e6e0d2" opacity="0.38"/>
<rect x="56.5" y="141.8" width="2.0" height="3.4" fill="#626c90" opacity="0.47"/>
<rect x="105.4" y="53.6" width="2.6" height="5.8" fill="#a68f7a" opacity="0.47"/>
<rect x="186.5" y="90.3" width="1.5" height="7.7" fill="#e6e0d2" opacity="0.69"/>
<rect x="2.6" y="142.2" width="2.1" height="4.0" fill="#8a91ab" opacity="0.37"/>
<rect x="73.8" y="153.5" width="1.2" height="4.8" fill="#e6e0d2" opacity="0.69"/>
<rect x="62.6" y="29.4" width="1.7" height="7.2" fill="#e6e0d2" opacity="0.55"/>
<rect x="128.0" y="45.4" width="1.7" height="4.5" fill="#efebe2" opacity="0.66"/>
<rect x="107.8" y="76.8" width="2.1" height="3.9" fill="#b8ab8c" opacity="0.68"/>
<rect x="90.9" y="126.1" width="2.6" height="7.4" fill="#626c90" opacity="0.41"/>
<rect x="94.2" y="184.1" width="2.4" height="7.6" fill="#8a91ab" opacity="0.46"/>
<rect x="102.9" y="74.3" width="2.7" height="4.1" fill="#efebe2" opacity="0.38"/>
<rect x="127.9" y="63.6" width="1.4" height="6.6" fill="#b8ab8c" opacity="0.63"/>
<rect x="121.0" y="127.6" width="2.0" height="4.0" fill="#626c90" opacity="0.55"/>
<rect x="117.4" y="85.4" width="1.7" height="6.0" fill="#e6e0d2" opacity="0.37"/>
<rect x="25.0" y="3.1" width="1.9" height="3.0" fill="#b8ab8c" opacity="0.63"/>
<rect x="42.3" y="154.7" width="1.3" height="3.6" fill="#a68f7a" opacity="0.57"/>
<rect x="17.3" y="64.7" width="2.7" height="5.2" fill="#e6e0d2" opacity="0.52"/>
<rect x="52.9" y="157.0" width="2.0" height="7.6" fill="#b8ab8c" opacity="0.58"/>
<rect x="128.3" y="82.3" width="2.8" height="7.5" fill="#8a91ab" opacity="0.59"/>
<rect x="148.7" y="132.5" width="1.7" height="7.3" fill="#a68f7a" opacity="0.39"/>
<rect x="87.9" y="133.0" width="2.7" height="2.6" fill="#e6e0d2" opacity="0.53"/>
<rect x="62.9" y="147.6" width="2.3" height="4.7" fill="#626c90" opacity="0.68"/>
<rect x="161.6" y="182.5" width="1.4" height="7.9" fill="#8a91ab" opacity="0.65"/>
<rect x="56.7" y="33.1" width="2.4" height="3.9" fill="#efebe2" opacity="0.60"/>
<rect x="120.7" y="139.6" width="1.3" height="7.3" fill="#626c90" opacity="0.62"/>
<rect x="146.4" y="163.1" width="1.6" height="5.2" fill="#626c90" opacity="0.67"/>
<rect x="40.5" y="132.4" width="1.2" height="3.4" fill="#e6e0d2" opacity="0.63"/>
<rect x="41.2" y="121.5" width="1.4" height="3.3" fill="#a68f7a" opacity="0.50"/>
<rect x="86.2" y="128.6" width="2.2" height="6.3" fill="#e6e0d2" opacity="0.68"/>
<rect x="60.5" y="173.2" width="1.7" height="7.7" fill="#e6e0d2" opacity="0.57"/>
<rect x="179.9" y="144.3" width="1.4" height="3.7" fill="#8a91ab" opacity="0.70"/>
<rect x="10.4" y="16.3" width="2.1" height="5.1" fill="#efebe2" opacity="0.61"/>
<rect x="45.2" y="35.7" width="1.8" height="4.9" fill="#626c90" opacity="0.49"/>
<rect x="62.2" y="179.2" width="2.0" height="7.7" fill="#8a91ab" opacity="0.57"/>
<rect x="76.3" y="74.9" width="2.5" height="7.5" fill="#8a91ab" opacity="0.38"/>
<rect x="79.1" y="88.0" width="2.4" height="5.6" fill="#8a91ab" opacity="0.57"/>
<rect x="175.3" y="168.6" width="2.1" height="4.8" fill="#8a91ab" opacity="0.35"/>
<rect x="14.5" y="32.4" width="2.2" height="3.5" fill="#e6e0d2" opacity="0.69"/>
<rect x="146.8" y="108.5" width="1.6" height="6.9" fill="#8a91ab" opacity="0.36"/>
<rect x="9.0" y="9.5" width="2.7" height="3.6" fill="#e6e0d2" opacity="0.44"/>
<rect x="169.0" y="102.0" width="1.6" height="6.3" fill="#e6e0d2" opacity="0.50"/>
<rect x="22.2" y="78.4" width="2.5" height="3.8" fill="#626c90" opacity="0.64"/>
<rect x="43.4" y="161.2" width="1.3" height="6.4" fill="#8a91ab" opacity="0.39"/>
<rect x="8.3" y="87.5" width="1.8" height="6.6" fill="#e6e0d2" opacity="0.61"/>
<rect x="115.0" y="37.3" width="2.6" height="5.2" fill="#8a91ab" opacity="0.56"/>
<rect x="57.6" y="183.9" width="1.7" height="2.6" fill="#e6e0d2" opacity="0.64"/>
<rect x="134.3" y="107.1" width="1.8" height="7.4" fill="#efebe2" opacity="0.44"/>
<rect x="147.6" y="131.8" width="1.5" height="6.1" fill="#b8ab8c" opacity="0.42"/>
<rect x="80.2" y="37.9" width="1.9" height="4.2" fill="#e6e0d2" opacity="0.62"/>
<rect x="84.0" y="87.5" width="1.9" height="4.6" fill="#b8ab8c" opacity="0.66"/>
<rect x="182.5" y="146.5" width="2.6" height="2.9" fill="#8a91ab" opacity="0.43"/>
<rect x="41.2" y="112.2" width="2.2" height="6.2" fill="#626c90" opacity="0.50"/>
<rect x="121.5" y="40.7" width="1.3" height="5.7" fill="#a68f7a" opacity="0.60"/>
<rect x="104.5" y="72.0" width="1.8" height="4.8" fill="#8a91ab" opacity="0.38"/>
<rect x="69.8" y="161.3" width="2.8" height="3.6" fill="#8a91ab" opacity="0.67"/>
<rect x="9.3" y="108.2" width="2.5" height="4.7" fill="#8a91ab" opacity="0.56"/>
<rect x="132.6" y="142.0" width="1.8" height="5.1" fill="#efebe2" opacity="0.44"/>
<rect x="126.7" y="75.0" width="2.8" height="3.3" fill="#8a91ab" opacity="0.62"/>
<rect x="59.4" y="135.3" width="1.6" height="5.6" fill="#e6e0d2" opacity="0.53"/>
<rect x="91.6" y="29.6" width="2.5" height="5.2" fill="#626c90" opacity="0.52"/>
<rect x="169.3" y="180.8" width="1.4" height="5.8" fill="#626c90" opacity="0.51"/>
<rect x="98.1" y="185.3" width="1.2" height="4.1" fill="#626c90" opacity="0.50"/>
<rect x="7.8" y="-0.3" width="2.3" height="6.3" fill="#b8ab8c" opacity="0.64"/>
<rect x="69.9" y="49.7" width="2.1" height="5.3" fill="#8a91ab" opacity="0.54"/>
<rect x="73.2" y="74.5" width="1.7" height="7.3" fill="#a68f7a" opacity="0.68"/>
<rect x="45.2" y="31.6" width="2.7" height="6.0" fill="#e6e0d2" opacity="0.36"/>
<rect x="34.2" y="2.0" width="2.3" height="2.7" fill="#e6e0d2" opacity="0.64"/>
<rect x="160.5" y="37.9" width="1.8" height="4.3" fill="#efebe2" opacity="0.63"/>
<rect x="168.9" y="157.8" width="1.7" height="4.9" fill="#efebe2" opacity="0.63"/>
<rect x="105.7" y="113.2" width="1.6" height="3.7" fill="#8a91ab" opacity="0.57"/>
<rect x="26.4" y="180.2" width="2.5" height="7.4" fill="#8a91ab" opacity="0.41"/>
<rect x="32.5" y="110.0" width="1.5" height="4.5" fill="#a68f7a" opacity="0.60"/>
<rect x="38.8" y="164.8" width="2.0" height="2.8" fill="#8a91ab" opacity="0.52"/>
<rect x="124.4" y="158.7" width="1.3" height="7.1" fill="#efebe2" opacity="0.54"/>
<rect x="64.7" y="184.1" width="2.1" height="4.6" fill="#626c90" opacity="0.63"/>
<rect x="76.9" y="169.8" width="1.5" height="4.0" fill="#626c90" opacity="0.58"/>
<rect x="129.4" y="58.9" width="2.4" height="3.7" fill="#b8ab8c" opacity="0.36"/>
<rect x="45.2" y="-1.3" width="1.7" height="2.6" fill="#8a91ab" opacity="0.48"/>
<rect x="76.7" y="30.6" width="1.4" height="7.2" fill="#8a91ab" opacity="0.51"/>
<rect x="94.7" y="56.9" width="2.6" height="6.9" fill="#a68f7a" opacity="0.51"/>
<rect x="133.7" y="44.2" width="1.8" height="4.0" fill="#8a91ab" opacity="0.51"/>
<rect x="106.7" y="186.5" width="2.6" height="3.7" fill="#a68f7a" opacity="0.36"/>
<rect x="54.9" y="4.0" width="1.3" height="5.0" fill="#a68f7a" opacity="0.53"/>
<rect x="67.5" y="172.4" width="2.3" height="6.3" fill="#b8ab8c" opacity="0.61"/>
<rect x="83.9" y="73.1" width="1.6" height="5.7" fill="#b8ab8c" opacity="0.58"/>
<rect x="163.0" y="34.8" width="1.6" height="7.8" fill="#e6e0d2" opacity="0.54"/>
<rect x="95.3" y="56.6" width="2.0" height="7.9" fill="#8a91ab" opacity="0.38"/>
<rect x="185.7" y="0.5" width="2.5" height="6.4" fill="#8a91ab" opacity="0.61"/>
<rect x="82.6" y="185.0" width="2.1" height="5.5" fill="#8a91ab" opacity="0.37"/>
<rect x="43.8" y="92.4" width="2.2" height="7.0" fill="#b8ab8c" opacity="0.70"/>
<rect x="172.2" y="114.2" width="1.6" height="6.1" fill="#e6e0d2" opacity="0.43"/>
<rect x="11.8" y="142.0" width="1.5" height="7.4" fill="#8a91ab" opacity="0.53"/>
<rect x="182.6" y="32.8" width="2.5" height="6.5" fill="#8a91ab" opacity="0.62"/>
<rect x="8.8" y="4.5" width="2.3" height="6.9" fill="#a68f7a" opacity="0.57"/>
<rect x="137.9" y="165.5" width="2.7" height="4.3" fill="#626c90" opacity="0.44"/>
<rect x="154.5" y="32.9" width="1.4" height="2.5" fill="#626c90" opacity="0.59"/>
<rect x="161.7" y="55.5" width="1.6" height="6.4" fill="#626c90" opacity="0.41"/>
<rect x="91.6" y="181.0" width="2.1" height="4.0" fill="#8a91ab" opacity="0.42"/>
<rect x="13.7" y="45.6" width="1.6" height="4.1" fill="#efebe2" opacity="0.65"/>
<rect x="130.4" y="183.2" width="2.2" height="6.3" fill="#626c90" opacity="0.68"/>
<rect x="58.5" y="-0.7" width="2.0" height="4.6" fill="#8a91ab" opacity="0.54"/>
<rect x="7.2" y="3.3" width="1.8" height="4.3" fill="#626c90" opacity="0.40"/>
<rect x="110.0" y="170.9" width="1.5" height="2.6" fill="#8a91ab" opacity="0.58"/>
<rect x="119.8" y="116.4" width="1.5" height="6.5" fill="#b8ab8c" opacity="0.38"/>
<rect x="161.4" y="4.3" width="1.8" height="3.7" fill="#8a91ab" opacity="0.50"/>
<rect x="69.0" y="28.8" width="2.4" height="2.8" fill="#8a91ab" opacity="0.64"/>
<rect x="25.9" y="28.7" width="2.6" height="3.8" fill="#e6e0d2" opacity="0.58"/>
<rect x="25.4" y="132.8" width="2.6" height="5.8" fill="#8a91ab" opacity="0.67"/>
<rect x="5.1" y="19.3" width="1.5" height="5.0" fill="#8a91ab" opacity="0.50"/>
<rect x="11.9" y="96.7" width="1.5" height="5.4" fill="#e6e0d2" opacity="0.48"/>
<rect x="26.3" y="105.4" width="1.4" height="2.5" fill="#b8ab8c" opacity="0.46"/>
<rect x="184.7" y="3.3" width="1.7" height="2.6" fill="#a68f7a" opacity="0.66"/>
<rect x="109.1" y="72.1" width="1.7" height="6.2" fill="#b8ab8c" opacity="0.41"/>
<rect x="149.2" y="164.6" width="1.4" height="6.1" fill="#efebe2" opacity="0.44"/>
<rect x="54.1" y="44.2" width="1.4" height="6.5" fill="#a68f7a" opacity="0.58"/>
<rect x="116.7" y="161.5" width="2.4" height="3.1" fill="#8a91ab" opacity="0.69"/>
<rect x="138.0" y="161.7" width="2.1" height="6.2" fill="#8a91ab" opacity="0.55"/>
<rect x="164.4" y="166.1" width="2.8" height="7.1" fill="#8a91ab" opacity="0.58"/>
<rect x="179.5" y="25.2" width="2.0" height="3.0" fill="#8a91ab" opacity="0.62"/>
<rect x="121.9" y="80.1" width="1.6" height="4.3" fill="#626c90" opacity="0.56"/>
<rect x="34.2" y="82.6" width="1.6" height="4.5" fill="#e6e0d2" opacity="0.59"/>
<rect x="33.9" y="158.5" width="1.8" height="5.8" fill="#8a91ab" opacity="0.61"/>
<rect x="19.8" y="128.0" width="1.7" height="4.0" fill="#626c90" opacity="0.70"/>
<rect x="41.9" y="89.0" width="1.9" height="5.1" fill="#efebe2" opacity="0.59"/>
<rect x="48.7" y="104.2" width="1.7" height="6.6" fill="#8a91ab" opacity="0.51"/>
<rect x="180.7" y="36.4" width="2.2" height="6.3" fill="#626c90" opacity="0.50"/>
<rect x="157.6" y="101.1" width="2.1" height="6.2" fill="#8a91ab" opacity="0.69"/>
<rect x="9.0" y="16.6" width="1.4" height="6.2" fill="#e6e0d2" opacity="0.44"/>
<rect x="46.3" y="84.1" width="2.7" height="2.8" fill="#8a91ab" opacity="0.58"/>
<rect x="159.2" y="28.3" width="1.4" height="5.8" fill="#8a91ab" opacity="0.64"/>
<rect x="135.7" y="165.1" width="2.2" height="3.8" fill="#b8ab8c" opacity="0.37"/>
<rect x="100.0" y="59.7" width="2.4" height="6.0" fill="#b8ab8c" opacity="0.51"/>
<rect x="0.0" y="88.0" width="2.0" height="7.5" fill="#8a91ab" opacity="0.40"/>
<rect x="48.3" y="99.9" width="2.2" height="6.3" fill="#8a91ab" opacity="0.70"/>
<rect x="147.8" y="52.8" width="2.2" height="4.8" fill="#b8ab8c" opacity="0.45"/>
<rect x="179.6" y="127.6" width="2.3" height="7.2" fill="#8a91ab" opacity="0.38"/>
<rect x="20.2" y="130.6" width="1.3" height="6.2" fill="#b8ab8c" opacity="0.40"/>
<rect x="26.2" y="78.0" width="1.6" height="3.3" fill="#626c90" opacity="0.58"/>
<rect x="56.7" y="70.5" width="2.4" height="2.5" fill="#8a91ab" opacity="0.41"/>
<rect x="24.9" y="28.7" width="2.6" height="6.6" fill="#e6e0d2" opacity="0.37"/>
<rect x="125.6" y="38.4" width="1.5" height="7.9" fill="#b8ab8c" opacity="0.45"/>
<rect x="7.2" y="131.3" width="2.4" height="3.1" fill="#8a91ab" opacity="0.36"/>
<rect x="121.2" y="86.8" width="2.4" height="7.1" fill="#a68f7a" opacity="0.67"/>
<rect x="31.7" y="91.5" width="2.7" height="3.6" fill="#8a91ab" opacity="0.58"/>
<rect x="11.9" y="172.6" width="2.2" height="4.3" fill="#b8ab8c" opacity="0.60"/>
<rect x="168.8" y="148.2" width="2.5" height="3.8" fill="#e6e0d2" opacity="0.65"/>
<rect x="95.3" y="101.3" width="1.6" height="5.5" fill="#8a91ab" opacity="0.46"/>
<rect x="29.8" y="138.6" width="1.6" height="6.2" fill="#a68f7a" opacity="0.65"/>
<rect x="175.1" y="40.3" width="1.4" height="3.0" fill="#e6e0d2" opacity="0.41"/>
<rect x="154.2" y="91.8" width="2.0" height="3.6" fill="#626c90" opacity="0.38"/>
<rect x="40.6" y="112.6" width="1.4" height="6.4" fill="#8a91ab" opacity="0.56"/>
<rect x="113.9" y="143.5" width="2.5" height="6.8" fill="#626c90" opacity="0.50"/>
<rect x="42.7" y="183.1" width="2.5" height="3.2" fill="#8a91ab" opacity="0.44"/>
<rect x="86.0" y="104.0" width="2.5" height="6.2" fill="#8a91ab" opacity="0.65"/>
<rect x="71.0" y="119.5" width="1.8" height="5.6" fill="#8a91ab" opacity="0.69"/>
<rect x="30.8" y="170.2" width="1.8" height="3.1" fill="#626c90" opacity="0.40"/>
<rect x="118.6" y="166.6" width="2.1" height="6.8" fill="#e6e0d2" opacity="0.52"/>
<rect x="15.8" y="10.7" width="2.0" height="3.6" fill="#efebe2" opacity="0.45"/>
<rect x="78.2" y="50.6" width="2.0" height="3.7" fill="#efebe2" opacity="0.55"/>
<rect x="145.2" y="91.8" width="1.4" height="2.9" fill="#e6e0d2" opacity="0.63"/>
<rect x="111.2" y="58.4" width="2.0" height="4.9" fill="#e6e0d2" opacity="0.44"/>
<rect x="23.2" y="115.6" width="2.6" height="5.7" fill="#a68f7a" opacity="0.39"/>
<rect x="16.4" y="15.5" width="2.2" height="4.1" fill="#8a91ab" opacity="0.46"/>
<rect x="53.9" y="53.7" width="2.4" height="6.1" fill="#e6e0d2" opacity="0.52"/>
<rect x="145.0" y="124.5" width="2.0" height="7.3" fill="#8a91ab" opacity="0.63"/>
<rect x="138.8" y="167.3" width="2.1" height="6.8" fill="#626c90" opacity="0.64"/>
<rect x="15.5" y="25.4" width="2.6" height="7.8" fill="#e6e0d2" opacity="0.62"/>
<rect x="19.5" y="24.5" width="2.1" height="4.0" fill="#8a91ab" opacity="0.62"/>
<rect x="60.7" y="157.8" width="1.9" height="5.2" fill="#a68f7a" opacity="0.48"/>
<rect x="169.0" y="38.0" width="1.6" height="6.7" fill="#8a91ab" opacity="0.56"/>
<rect x="124.1" y="76.1" width="2.2" height="4.9" fill="#b8ab8c" opacity="0.36"/>
<rect x="9.2" y="86.0" width="1.4" height="3.6" fill="#b8ab8c" opacity="0.54"/>
<rect x="107.9" y="-1.4" width="1.8" height="3.4" fill="#626c90" opacity="0.64"/>
<rect x="182.6" y="31.7" width="2.6" height="5.2" fill="#a68f7a" opacity="0.56"/>
<rect x="120.1" y="67.1" width="1.6" height="7.5" fill="#8a91ab" opacity="0.67"/>
<rect x="43.6" y="120.5" width="2.1" height="4.4" fill="#efebe2" opacity="0.69"/>
<rect x="3.2" y="144.9" width="1.9" height="6.3" fill="#a68f7a" opacity="0.60"/>
<rect x="59.7" y="105.1" width="1.4" height="5.4" fill="#8a91ab" opacity="0.55"/>
<rect x="173.5" y="102.0" width="2.3" height="3.7" fill="#8a91ab" opacity="0.47"/>
<rect x="13.5" y="40.3" width="1.7" height="3.3" fill="#e6e0d2" opacity="0.56"/>
<rect x="156.6" y="70.1" width="1.5" height="4.4" fill="#8a91ab" opacity="0.51"/>
<rect x="142.8" y="33.2" width="2.7" height="3.6" fill="#a68f7a" opacity="0.48"/>
<rect x="6.3" y="90.4" width="2.0" height="6.9" fill="#e6e0d2" opacity="0.44"/>
<rect x="151.2" y="171.9" width="1.7" height="5.4" fill="#626c90" opacity="0.38"/>
<rect x="159.1" y="60.2" width="1.6" height="5.0" fill="#a68f7a" opacity="0.67"/>
<rect x="12.3" y="109.0" width="1.5" height="7.4" fill="#8a91ab" opacity="0.65"/>
<rect x="53.3" y="77.2" width="2.2" height="7.0" fill="#e6e0d2" opacity="0.37"/>
<rect x="44.4" y="136.2" width="1.9" height="5.2" fill="#8a91ab" opacity="0.62"/>
<rect x="56.1" y="49.1" width="1.8" height="5.6" fill="#8a91ab" opacity="0.45"/>
<rect x="1.2" y="125.5" width="2.1" height="6.9" fill="#8a91ab" opacity="0.38"/>
<rect x="27.7" y="42.9" width="2.0" height="2.6" fill="#a68f7a" opacity="0.66"/>
<rect x="66.1" y="81.9" width="1.5" height="4.8" fill="#b8ab8c" opacity="0.49"/>
<rect x="155.7" y="121.5" width="1.8" height="6.6" fill="#e6e0d2" opacity="0.53"/>
<rect x="147.7" y="155.9" width="2.4" height="6.2" fill="#a68f7a" opacity="0.51"/>
<rect x="98.8" y="107.4" width="2.0" height="7.9" fill="#b8ab8c" opacity="0.67"/>
<rect x="155.4" y="154.2" width="2.2" height="7.5" fill="#b8ab8c" opacity="0.37"/>
<rect x="87.8" y="68.9" width="1.5" height="5.6" fill="#626c90" opacity="0.40"/>
<rect x="140.5" y="90.4" width="2.2" height="7.0" fill="#efebe2" opacity="0.50"/>
<rect x="60.0" y="167.0" width="2.6" height="6.8" fill="#8a91ab" opacity="0.45"/>
<rect x="13.3" y="132.1" width="2.7" height="5.7" fill="#efebe2" opacity="0.60"/>
<rect x="12.6" y="81.6" width="1.7" height="3.1" fill="#8a91ab" opacity="0.66"/>
<rect x="174.6" y="21.5" width="1.4" height="5.5" fill="#b8ab8c" opacity="0.53"/>
<rect x="32.4" y="70.7" width="2.0" height="4.9" fill="#b8ab8c" opacity="0.56"/>
<rect x="175.7" y="174.1" width="1.6" height="3.8" fill="#b8ab8c" opacity="0.51"/>
<rect x="119.6" y="112.6" width="2.3" height="4.1" fill="#8a91ab" opacity="0.58"/>
<rect x="22.5" y="174.2" width="2.7" height="7.7" fill="#efebe2" opacity="0.58"/>
<rect x="16.8" y="20.4" width="2.6" height="3.9" fill="#e6e0d2" opacity="0.39"/>
<rect x="180.7" y="181.6" width="2.1" height="3.2" fill="#efebe2" opacity="0.47"/>
<rect x="169.7" y="142.2" width="2.2" height="6.4" fill="#b8ab8c" opacity="0.61"/>
<rect x="23.8" y="46.6" width="1.5" height="6.6" fill="#8a91ab" opacity="0.39"/>
<rect x="5.1" y="130.6" width="2.6" height="7.0" fill="#8a91ab" opacity="0.55"/>
<rect x="12.0" y="136.3" width="2.5" height="2.7" fill="#efebe2" opacity="0.37"/>
<rect x="136.1" y="90.2" width="2.8" height="5.0" fill="#626c90" opacity="0.59"/>
<rect x="123.7" y="129.1" width="1.3" height="7.9" fill="#8a91ab" opacity="0.62"/>
<rect x="69.6" y="133.2" width="1.9" height="3.6" fill="#8a91ab" opacity="0.51"/>
<rect x="126.6" y="101.6" width="1.5" height="7.9" fill="#e6e0d2" opacity="0.67"/>
<rect x="155.9" y="23.9" width="2.1" height="3.2" fill="#efebe2" opacity="0.63"/>
<rect x="124.7" y="131.5" width="2.4" height="5.9" fill="#8a91ab" opacity="0.47"/>
<rect x="8.2" y="126.7" width="2.3" height="5.8" fill="#e6e0d2" opacity="0.63"/>
<rect x="179.4" y="151.6" width="1.9" height="2.6" fill="#b8ab8c" opacity="0.57"/>
<rect x="118.7" y="161.1" width="1.8" height="2.8" fill="#626c90" opacity="0.58"/>
<rect x="59.2" y="90.9" width="2.1" height="7.2" fill="#b8ab8c" opacity="0.62"/>
<rect x="185.3" y="85.4" width="1.8" height="2.6" fill="#626c90" opacity="0.46"/>
<rect x="64.4" y="185.6" width="1.7" height="2.9" fill="#8a91ab" opacity="0.66"/>
<rect x="106.8" y="138.7" width="1.4" height="5.8" fill="#efebe2" opacity="0.50"/>
<rect x="149.6" y="62.2" width="1.5" height="5.4" fill="#626c90" opacity="0.43"/>
<rect x="0.7" y="55.0" width="1.7" height="5.2" fill="#efebe2" opacity="0.53"/>
<rect x="48.3" y="99.1" width="1.9" height="7.4" fill="#e6e0d2" opacity="0.68"/>
<rect x="144.7" y="149.8" width="1.4" height="4.2" fill="#626c90" opacity="0.48"/>
<rect x="63.5" y="44.8" width="2.5" height="7.9" fill="#e6e0d2" opacity="0.62"/>
<rect x="27.8" y="105.2" width="1.9" height="5.0" fill="#626c90" opacity="0.48"/>
<rect x="57.1" y="180.3" width="2.8" height="4.6" fill="#e6e0d2" opacity="0.37"/>
<rect x="124.5" y="47.1" width="1.5" height="5.0" fill="#8a91ab" opacity="0.50"/>
<rect x="158.1" y="182.5" width="2.8" height="7.4" fill="#b8ab8c" opacity="0.67"/>
<rect x="45.8" y="153.7" width="2.2" height="7.0" fill="#e6e0d2" opacity="0.52"/>
<rect x="94.9" y="128.1" width="2.3" height="5.4" fill="#8a91ab" opacity="0.35"/>
<rect x="152.7" y="91.8" width="2.0" height="5.0" fill="#b8ab8c" opacity="0.44"/>
<rect x="186.9" y="60.0" width="2.3" height="4.3" fill="#8a91ab" opacity="0.62"/>
<rect x="107.4" y="76.2" width="2.5" height="7.2" fill="#b8ab8c" opacity="0.59"/>
<rect x="53.4" y="14.2" width="1.8" height="3.5" fill="#8a91ab" opacity="0.35"/>
<rect x="180.1" y="140.1" width="2.1" height="2.8" fill="#a68f7a" opacity="0.41"/>
<rect x="7.3" y="113.7" width="1.8" height="8.0" fill="#626c90" opacity="0.45"/>
<rect x="14.0" y="1.4" width="1.5" height="5.7" fill="#e6e0d2" opacity="0.49"/>
<rect x="101.6" y="164.5" width="2.5" height="5.4" fill="#8a91ab" opacity="0.39"/>
<rect x="3.6" y="113.2" width="1.3" height="6.4" fill="#b8ab8c" opacity="0.43"/>
<rect x="127.9" y="155.4" width="1.5" height="4.1" fill="#efebe2" opacity="0.53"/>
<rect x="91.1" y="153.0" width="1.3" height="4.1" fill="#8a91ab" opacity="0.36"/>
<rect x="164.4" y="64.8" width="2.6" height="2.8" fill="#e6e0d2" opacity="0.68"/>
<rect x="43.1" y="159.2" width="1.4" height="5.4" fill="#8a91ab" opacity="0.37"/>
<rect x="81.5" y="150.7" width="1.9" height="3.2" fill="#8a91ab" opacity="0.55"/>
<rect x="153.7" y="48.1" width="2.1" height="5.5" fill="#b8ab8c" opacity="0.60"/>
<rect x="177.2" y="129.3" width="2.8" height="3.2" fill="#8a91ab" opacity="0.65"/>
<rect x="40.2" y="184.8" width="2.3" height="4.8" fill="#b8ab8c" opacity="0.37"/>
<rect x="20.8" y="174.7" width="2.6" height="4.6" fill="#b8ab8c" opacity="0.69"/>
<rect x="30.1" y="135.2" width="1.5" height="2.5" fill="#b8ab8c" opacity="0.39"/>
<rect x="13.8" y="149.9" width="2.5" height="4.8" fill="#626c90" opacity="0.68"/>
<rect x="0.7" y="51.6" width="2.2" height="6.0" fill="#e6e0d2" opacity="0.63"/>
<rect x="25.2" y="90.8" width="2.2" height="3.4" fill="#e6e0d2" opacity="0.66"/>
<rect x="123.3" y="165.6" width="2.5" height="7.1" fill="#8a91ab" opacity="0.63"/>
<rect x="38.8" y="63.3" width="1.9" height="5.0" fill="#e6e0d2" opacity="0.50"/>
<rect x="23.6" y="49.7" width="2.6" height="7.8" fill="#a68f7a" opacity="0.61"/>
<rect x="164.8" y="172.6" width="1.7" height="5.5" fill="#8a91ab" opacity="0.70"/>
<rect x="165.9" y="105.7" width="1.4" height="5.6" fill="#626c90" opacity="0.37"/>
<rect x="152.6" y="137.7" width="1.9" height="4.9" fill="#8a91ab" opacity="0.37"/>
<rect x="147.1" y="105.7" width="2.5" height="6.2" fill="#8a91ab" opacity="0.60"/>
<rect x="23.9" y="94.1" width="1.9" height="3.3" fill="#626c90" opacity="0.64"/>
<rect x="113.3" y="161.8" width="2.3" height="7.0" fill="#b8ab8c" opacity="0.67"/>
<rect x="114.2" y="176.5" width="2.2" height="2.8" fill="#626c90" opacity="0.42"/>
<rect x="79.6" y="157.6" width="2.1" height="3.9" fill="#8a91ab" opacity="0.37"/>
<rect x="103.6" y="75.3" width="1.5" height="3.6" fill="#b8ab8c" opacity="0.36"/>
<rect x="3.4" y="150.6" width="1.4" height="2.6" fill="#8a91ab" opacity="0.55"/>
<rect x="44.6" y="114.1" width="2.0" height="6.5" fill="#efebe2" opacity="0.55"/>
<rect x="47.7" y="35.3" width="2.6" height="6.2" fill="#efebe2" opacity="0.66"/>
<rect x="63.3" y="178.3" width="1.2" height="6.9" fill="#626c90" opacity="0.36"/>
<rect x="136.7" y="143.8" width="2.2" height="3.8" fill="#626c90" opacity="0.39"/>
<rect x="49.6" y="66.7" width="2.5" height="7.1" fill="#e6e0d2" opacity="0.69"/>
<rect x="112.1" y="174.8" width="1.6" height="5.9" fill="#626c90" opacity="0.39"/>
<rect x="112.2" y="51.7" width="1.8" height="3.4" fill="#626c90" opacity="0.66"/>
<rect x="123.7" y="43.9" width="1.9" height="7.2" fill="#e6e0d2" opacity="0.54"/>
<rect x="95.9" y="112.5" width="1.3" height="3.4" fill="#b8ab8c" opacity="0.63"/>
<rect x="110.7" y="53.4" width="1.9" height="7.4" fill="#626c90" opacity="0.68"/>
<rect x="53.4" y="106.6" width="2.7" height="5.1" fill="#b8ab8c" opacity="0.68"/>
<rect x="113.6" y="129.2" width="1.6" height="3.6" fill="#626c90" opacity="0.42"/>
<rect x="13.1" y="96.9" width="2.1" height="6.3" fill="#8a91ab" opacity="0.63"/>
<rect x="146.2" y="87.0" width="1.7" height="5.1" fill="#8a91ab" opacity="0.59"/>
<rect x="38.7" y="136.6" width="2.7" height="4.1" fill="#626c90" opacity="0.44"/>
<rect x="140.5" y="37.4" width="1.8" height="4.9" fill="#8a91ab" opacity="0.61"/>
<rect x="133.9" y="33.0" width="2.8" height="5.2" fill="#8a91ab" opacity="0.70"/>
<rect x="115.4" y="70.7" width="1.4" height="4.2" fill="#e6e0d2" opacity="0.61"/>
<rect x="159.0" y="41.4" width="1.9" height="6.6" fill="#a68f7a" opacity="0.56"/>
<rect x="117.9" y="101.6" width="2.6" height="4.0" fill="#626c90" opacity="0.65"/>
<rect x="135.4" y="138.7" width="2.0" height="4.5" fill="#8a91ab" opacity="0.41"/>
<rect x="165.9" y="31.5" width="1.5" height="5.6" fill="#efebe2" opacity="0.43"/>
<rect x="53.2" y="121.1" width="1.2" height="7.9" fill="#b8ab8c" opacity="0.67"/>
<rect x="82.7" y="118.5" width="2.8" height="7.2" fill="#b8ab8c" opacity="0.48"/>
<rect x="52.0" y="146.4" width="2.1" height="5.1" fill="#626c90" opacity="0.54"/>
<rect x="147.7" y="111.3" width="1.5" height="7.9" fill="#8a91ab" opacity="0.59"/>
<rect x="62.5" y="95.3" width="1.3" height="6.1" fill="#626c90" opacity="0.52"/>
<rect x="52.4" y="28.1" width="1.5" height="3.8" fill="#8a91ab" opacity="0.47"/>
<rect x="165.9" y="86.1" width="2.0" height="6.9" fill="#626c90" opacity="0.63"/>
<rect x="42.8" y="182.6" width="2.3" height="4.5" fill="#b8ab8c" opacity="0.50"/>
<rect x="184.6" y="91.9" width="2.2" height="5.9" fill="#8a91ab" opacity="0.48"/>
<rect x="186.7" y="72.4" width="2.1" height="5.4" fill="#8a91ab" opacity="0.54"/>
<rect x="104.0" y="177.5" width="1.5" height="4.5" fill="#efebe2" opacity="0.39"/>
<rect x="97.5" y="163.1" width="2.8" height="6.8" fill="#8a91ab" opacity="0.67"/>
<rect x="17.9" y="85.2" width="1.7" height="6.3" fill="#8a91ab" opacity="0.49"/>
<rect x="87.6" y="153.2" width="2.2" height="7.2" fill="#626c90" opacity="0.56"/>
<rect x="170.1" y="125.2" width="2.0" height="4.5" fill="#8a91ab" opacity="0.60"/>
<rect x="76.3" y="78.8" width="1.5" height="5.2" fill="#8a91ab" opacity="0.63"/>
<rect x="49.7" y="109.0" width="2.2" height="2.8" fill="#e6e0d2" opacity="0.47"/>
<rect x="174.1" y="47.7" width="1.7" height="8.0" fill="#e6e0d2" opacity="0.51"/>
<rect x="94.3" y="31.6" width="2.4" height="8.0" fill="#e6e0d2" opacity="0.65"/>
<rect x="18.7" y="6.2" width="1.5" height="3.9" fill="#e6e0d2" opacity="0.62"/>
<rect x="186.0" y="115.6" width="2.3" height="3.6" fill="#b8ab8c" opacity="0.61"/>
<rect x="79.3" y="98.0" width="2.4" height="3.1" fill="#e6e0d2" opacity="0.39"/>
<rect x="93.9" y="32.9" width="1.6" height="2.5" fill="#b8ab8c" opacity="0.48"/>
<rect x="171.9" y="136.6" width="1.9" height="6.7" fill="#626c90" opacity="0.52"/>
<rect x="172.2" y="128.0" width="1.3" height="7.1" fill="#8a91ab" opacity="0.65"/>
<rect x="39.4" y="64.9" width="2.0" height="5.3" fill="#a68f7a" opacity="0.40"/>
<rect x="136.4" y="45.9" width="1.2" height="4.3" fill="#8a91ab" opacity="0.53"/>
<rect x="133.1" y="100.3" width="2.5" height="5.5" fill="#b8ab8c" opacity="0.39"/>
<rect x="91.0" y="45.8" width="1.9" height="5.8" fill="#8a91ab" opacity="0.38"/>
<rect x="65.1" y="106.3" width="1.8" height="7.2" fill="#e6e0d2" opacity="0.61"/>
<rect x="23.8" y="103.3" width="1.8" height="2.6" fill="#8a91ab" opacity="0.61"/>
<rect x="10.8" y="42.1" width="2.0" height="7.0" fill="#a68f7a" opacity="0.51"/>
<rect x="1.3" y="105.7" width="2.0" height="3.5" fill="#8a91ab" opacity="0.37"/>
<rect x="33.5" y="97.1" width="2.0" height="4.8" fill="#626c90" opacity="0.57"/>
<rect x="107.4" y="88.5" width="2.5" height="5.4" fill="#b8ab8c" opacity="0.66"/>
<rect x="184.3" y="154.5" width="2.6" height="7.5" fill="#a68f7a" opacity="0.53"/>
<rect x="64.8" y="168.2" width="1.7" height="6.3" fill="#8a91ab" opacity="0.66"/>
<rect x="58.3" y="57.3" width="1.3" height="5.7" fill="#b8ab8c" opacity="0.66"/>
<rect x="2.0" y="102.6" width="2.1" height="4.7" fill="#efebe2" opacity="0.59"/>
<rect x="95.5" y="51.6" width="2.5" height="4.8" fill="#8a91ab" opacity="0.54"/>
<rect x="96.2" y="66.8" width="2.5" height="6.1" fill="#e6e0d2" opacity="0.54"/>
<rect x="146.5" y="12.2" width="2.5" height="4.0" fill="#e6e0d2" opacity="0.36"/>
<rect x="164.4" y="10.9" width="1.8" height="6.0" fill="#8a91ab" opacity="0.53"/>
<rect x="115.1" y="178.0" width="2.6" height="6.7" fill="#b8ab8c" opacity="0.43"/>
<rect x="61.0" y="137.7" width="2.3" height="3.3" fill="#626c90" opacity="0.44"/>
<rect x="9.1" y="107.8" width="2.3" height="5.7" fill="#626c90" opacity="0.52"/>
<rect x="176.1" y="96.6" width="2.1" height="5.8" fill="#efebe2" opacity="0.68"/>
<rect x="126.4" y="6.8" width="1.6" height="7.3" fill="#b8ab8c" opacity="0.53"/>
<rect x="23.6" y="111.1" width="1.6" height="5.1" fill="#8a91ab" opacity="0.51"/>
<rect x="64.5" y="107.8" width="2.4" height="3.5" fill="#8a91ab" opacity="0.49"/>
<rect x="118.9" y="83.9" width="1.8" height="7.5" fill="#efebe2" opacity="0.56"/>
<rect x="122.4" y="52.1" width="2.4" height="6.4" fill="#8a91ab" opacity="0.42"/>
<rect x="79.8" y="74.0" width="2.4" height="3.4" fill="#e6e0d2" opacity="0.48"/>
<rect x="69.5" y="61.3" width="1.6" height="3.4" fill="#8a91ab" opacity="0.58"/>
<rect x="52.9" y="146.4" width="2.3" height="4.9" fill="#8a91ab" opacity="0.69"/>
<rect x="164.2" y="131.3" width="2.7" height="7.6" fill="#8a91ab" opacity="0.49"/>
<rect x="60.0" y="115.6" width="2.8" height="5.2" fill="#e6e0d2" opacity="0.63"/>
<rect x="-0.1" y="135.0" width="2.2" height="3.3" fill="#e6e0d2" opacity="0.58"/>
<rect x="42.4" y="114.6" width="2.1" height="6.6" fill="#8a91ab" opacity="0.43"/>
<rect x="97.7" y="159.1" width="1.8" height="3.8" fill="#8a91ab" opacity="0.54"/>
<rect x="124.6" y="175.8" width="2.5" height="6.0" fill="#e6e0d2" opacity="0.62"/>
<rect x="153.4" y="132.9" width="2.2" height="6.0" fill="#e6e0d2" opacity="0.48"/>
<rect x="42.1" y="77.2" width="1.4" height="2.6" fill="#efebe2" opacity="0.53"/>
<rect x="141.2" y="28.1" width="2.7" height="5.2" fill="#e6e0d2" opacity="0.54"/>
<rect x="125.8" y="28.2" width="2.5" height="5.3" fill="#8a91ab" opacity="0.53"/>
<rect x="71.6" y="154.3" width="2.2" height="5.4" fill="#e6e0d2" opacity="0.66"/>
<rect x="132.5" y="84.1" width="2.8" height="5.5" fill="#8a91ab" opacity="0.61"/>
<rect x="111.7" y="88.3" width="2.7" height="5.0" fill="#8a91ab" opacity="0.70"/>
<rect x="148.5" y="71.8" width="1.7" height="6.8" fill="#8a91ab" opacity="0.53"/>
<rect x="52.9" y="72.2" width="1.8" height="6.4" fill="#e6e0d2" opacity="0.49"/>
<rect x="145.8" y="55.3" width="2.1" height="6.2" fill="#e6e0d2" opacity="0.39"/>
<rect x="80.5" y="113.5" width="1.4" height="7.5" fill="#8a91ab" opacity="0.51"/>
<rect x="125.7" y="153.7" width="1.9" height="5.4" fill="#b8ab8c" opacity="0.37"/>
<rect x="43.8" y="133.2" width="2.8" height="7.8" fill="#8a91ab" opacity="0.62"/>
<rect x="60.5" y="95.1" width="2.7" height="4.6" fill="#b8ab8c" opacity="0.49"/>
<rect x="49.3" y="103.2" width="1.4" height="3.0" fill="#efebe2" opacity="0.57"/>
<rect x="84.2" y="164.5" width="2.7" height="5.9" fill="#e6e0d2" opacity="0.52"/>
<rect x="94.6" y="75.8" width="1.7" height="7.5" fill="#8a91ab" opacity="0.52"/>
<rect x="178.8" y="157.5" width="2.5" height="6.1" fill="#efebe2" opacity="0.41"/>
<rect x="177.9" y="32.4" width="1.5" height="3.7" fill="#b8ab8c" opacity="0.51"/>
<rect x="91.3" y="162.7" width="1.3" height="6.1" fill="#8a91ab" opacity="0.58"/>
<rect x="45.6" y="177.9" width="2.7" height="3.3" fill="#8a91ab" opacity="0.39"/>
<rect x="100.6" y="180.1" width="2.4" height="4.2" fill="#efebe2" opacity="0.37"/>
<rect x="136.4" y="139.4" width="1.3" height="3.5" fill="#626c90" opacity="0.45"/>
<rect x="4.5" y="127.0" width="2.2" height="2.9" fill="#8a91ab" opacity="0.48"/>
<rect x="76.1" y="159.1" width="2.3" height="3.9" fill="#626c90" opacity="0.62"/>
<rect x="161.2" y="70.8" width="1.5" height="6.6" fill="#a68f7a" opacity="0.35"/>
<rect x="30.6" y="58.5" width="2.4" height="4.6" fill="#e6e0d2" opacity="0.43"/>
<rect x="80.8" y="28.0" width="2.6" height="7.8" fill="#b8ab8c" opacity="0.67"/>
<rect x="120.7" y="155.2" width="1.9" height="5.1" fill="#a68f7a" opacity="0.35"/>
<rect x="75.8" y="31.9" width="1.7" height="4.9" fill="#a68f7a" opacity="0.40"/>
<rect x="80.9" y="91.6" width="2.4" height="4.1" fill="#8a91ab" opacity="0.51"/>
<rect x="173.4" y="123.3" width="2.0" height="3.7" fill="#efebe2" opacity="0.70"/>
<rect x="132.2" y="178.9" width="2.8" height="7.5" fill="#8a91ab" opacity="0.45"/>
<rect x="13.6" y="177.0" width="2.3" height="7.6" fill="#a68f7a" opacity="0.40"/>
<rect x="156.9" y="120.5" width="1.2" height="5.1" fill="#b8ab8c" opacity="0.65"/>
<rect x="117.2" y="65.9" width="1.3" height="2.7" fill="#8a91ab" opacity="0.56"/>
<rect x="112.2" y="100.5" width="2.0" height="4.9" fill="#e6e0d2" opacity="0.38"/>
<rect x="22.3" y="103.1" width="2.0" height="4.5" fill="#626c90" opacity="0.55"/>
<rect x="125.4" y="50.2" width="1.9" height="4.6" fill="#626c90" opacity="0.69"/>
<rect x="175.6" y="93.6" width="2.5" height="5.4" fill="#8a91ab" opacity="0.67"/>
<rect x="184.4" y="147.8" width="1.2" height="4.4" fill="#8a91ab" opacity="0.40"/>
<rect x="181.6" y="171.6" width="2.2" height="4.6" fill="#626c90" opacity="0.67"/>
<rect x="150.4" y="98.5" width="1.8" height="7.9" fill="#8a91ab" opacity="0.43"/>
<rect x="69.9" y="59.1" width="1.2" height="7.9" fill="#626c90" opacity="0.48"/>
<rect x="144.4" y="83.6" width="1.7" height="2.8" fill="#e6e0d2" opacity="0.45"/>
<rect x="177.6" y="185.1" width="2.3" height="2.9" fill="#e6e0d2" opacity="0.38"/>
<rect x="14.3" y="147.1" width="2.7" height="5.4" fill="#626c90" opacity="0.38"/>
<rect x="144.9" y="93.8" width="1.5" height="5.1" fill="#a68f7a" opacity="0.65"/>
<rect x="110.8" y="108.7" width="1.9" height="4.1" fill="#8a91ab" opacity="0.68"/>
<rect x="7.2" y="141.5" width="1.3" height="5.1" fill="#e6e0d2" opacity="0.50"/>
<rect x="42.7" y="106.8" width="1.8" height="4.4" fill="#8a91ab" opacity="0.40"/>
<rect x="129.5" y="68.3" width="2.0" height="6.6" fill="#626c90" opacity="0.38"/>
<rect x="81.3" y="71.0" width="1.2" height="5.3" fill="#8a91ab" opacity="0.37"/>
<rect x="24.1" y="94.1" width="2.1" height="5.2" fill="#b8ab8c" opacity="0.62"/>
<rect x="72.2" y="169.8" width="2.5" height="5.0" fill="#b8ab8c" opacity="0.41"/>
<rect x="53.0" y="116.7" width="2.2" height="4.9" fill="#e6e0d2" opacity="0.59"/>
<rect x="177.5" y="118.4" width="2.7" height="3.5" fill="#8a91ab" opacity="0.41"/>
<rect x="101.4" y="119.0" width="2.1" height="2.5" fill="#8a91ab" opacity="0.42"/>
<rect x="111.1" y="100.5" width="2.6" height="6.9" fill="#8a91ab" opacity="0.65"/>
<rect x="38.2" y="56.6" width="2.1" height="5.3" fill="#626c90" opacity="0.44"/>
<rect x="176.3" y="73.6" width="1.3" height="2.8" fill="#b8ab8c" opacity="0.55"/>
<rect x="14.3" y="163.7" width="1.4" height="7.8" fill="#8a91ab" opacity="0.57"/>
<rect x="-0.9" y="70.4" width="1.5" height="6.7" fill="#8a91ab" opacity="0.64"/>
<rect x="58.3" y="136.6" width="2.6" height="5.2" fill="#b8ab8c" opacity="0.63"/>
<rect x="64.8" y="140.3" width="1.4" height="3.3" fill="#a68f7a" opacity="0.40"/>
<rect x="150.5" y="151.8" width="1.4" height="6.4" fill="#8a91ab" opacity="0.44"/>
<rect x="92.0" y="150.8" width="2.0" height="3.2" fill="#626c90" opacity="0.48"/>
<rect x="160.4" y="151.4" width="1.9" height="4.5" fill="#b8ab8c" opacity="0.53"/>
<rect x="42.8" y="9.7" width="1.7" height="6.4" fill="#626c90" opacity="0.57"/>
<rect x="-1.6" y="37.5" width="2.5" height="5.2" fill="#626c90" opacity="0.60"/>
<rect x="63.5" y="174.0" width="2.8" height="3.0" fill="#8a91ab" opacity="0.57"/>
<rect x="113.9" y="113.8" width="2.2" height="3.9" fill="#b8ab8c" opacity="0.59"/>
<rect x="172.8" y="47.1" width="2.0" height="7.7" fill="#626c90" opacity="0.67"/>
<rect x="184.6" y="5.0" width="2.5" height="7.6" fill="#8a91ab" opacity="0.43"/>
<rect x="89.8" y="166.1" width="1.6" height="7.3" fill="#efebe2" opacity="0.58"/>
<rect x="22.6" y="2.9" width="1.7" height="4.2" fill="#b8ab8c" opacity="0.67"/>
<rect x="147.6" y="182.6" width="2.5" height="4.2" fill="#e6e0d2" opacity="0.45"/>
<rect x="95.8" y="142.2" width="1.4" height="3.5" fill="#8a91ab" opacity="0.44"/>
<rect x="105.8" y="59.0" width="1.3" height="4.6" fill="#8a91ab" opacity="0.51"/>
<rect x="38.1" y="161.8" width="2.8" height="4.5" fill="#e6e0d2" opacity="0.54"/>
<rect x="144.4" y="137.2" width="1.4" height="7.5" fill="#8a91ab" opacity="0.53"/>
<rect x="93.9" y="148.4" width="2.1" height="8.0" fill="#8a91ab" opacity="0.36"/>
<rect x="43.1" y="53.8" width="1.3" height="3.6" fill="#b8ab8c" opacity="0.55"/>
<rect x="57.4" y="76.3" width="2.1" height="5.7" fill="#8a91ab" opacity="0.35"/>
<rect x="10.7" y="152.9" width="2.7" height="3.2" fill="#626c90" opacity="0.57"/>
<rect x="67.0" y="158.1" width="2.6" height="7.1" fill="#626c90" opacity="0.40"/>
<rect x="126.1" y="41.2" width="1.3" height="5.6" fill="#8a91ab" opacity="0.43"/>
<rect x="130.0" y="65.2" width="1.9" height="5.7" fill="#e6e0d2" opacity="0.39"/>
<rect x="41.1" y="87.4" width="2.4" height="6.4" fill="#e6e0d2" opacity="0.39"/>
<rect x="15.6" y="51.3" width="2.0" height="5.0" fill="#b8ab8c" opacity="0.65"/>
<rect x="73.6" y="141.6" width="1.5" height="6.6" fill="#b8ab8c" opacity="0.48"/>
<rect x="38.0" y="34.3" width="2.0" height="6.0" fill="#8a91ab" opacity="0.57"/>
<rect x="39.7" y="38.8" width="2.5" height="5.0" fill="#8a91ab" opacity="0.44"/>
<rect x="134.3" y="37.7" width="1.7" height="4.4" fill="#e6e0d2" opacity="0.42"/>
<rect x="47.8" y="32.2" width="2.3" height="7.4" fill="#8a91ab" opacity="0.40"/>
<rect x="33.5" y="57.2" width="1.8" height="3.5" fill="#b8ab8c" opacity="0.66"/>
<rect x="12.5" y="8.7" width="1.5" height="4.3" fill="#8a91ab" opacity="0.46"/>
<rect x="61.4" y="54.8" width="1.6" height="3.9" fill="#8a91ab" opacity="0.70"/>
<rect x="133.0" y="137.2" width="1.3" height="7.8" fill="#8a91ab" opacity="0.55"/>
<rect x="140.7" y="97.8" width="2.1" height="5.2" fill="#8a91ab" opacity="0.65"/>
<rect x="186.7" y="152.4" width="1.3" height="2.6" fill="#8a91ab" opacity="0.38"/>
<rect x="166.6" y="122.3" width="2.3" height="4.1" fill="#a68f7a" opacity="0.58"/>
<rect x="185.8" y="126.8" width="2.4" height="5.5" fill="#8a91ab" opacity="0.52"/>
<rect x="97.5" y="171.6" width="1.8" height="7.2" fill="#e6e0d2" opacity="0.41"/>
<rect x="64.0" y="58.6" width="2.5" height="6.0" fill="#e6e0d2" opacity="0.60"/>
<rect x="78.9" y="149.1" width="1.3" height="3.9" fill="#8a91ab" opacity="0.62"/>
<rect x="53.5" y="15.9" width="2.7" height="5.9" fill="#8a91ab" opacity="0.53"/>
<rect x="154.0" y="61.8" width="1.9" height="8.0" fill="#a68f7a" opacity="0.44"/>
<rect x="101.0" y="30.7" width="2.6" height="3.2" fill="#626c90" opacity="0.66"/>
<rect x="179.2" y="65.2" width="1.9" height="7.6" fill="#a68f7a" opacity="0.55"/>
<rect x="128.0" y="68.0" width="2.5" height="7.7" fill="#8a91ab" opacity="0.37"/>
<rect x="105.7" y="131.4" width="1.4" height="3.0" fill="#8a91ab" opacity="0.45"/>
<rect x="47.8" y="143.9" width="1.9" height="7.0" fill="#626c90" opacity="0.38"/>
<rect x="134.6" y="131.7" width="2.4" height="4.2" fill="#b8ab8c" opacity="0.38"/>
<rect x="119.6" y="130.1" width="2.8" height="7.5" fill="#626c90" opacity="0.65"/>
<rect x="182.4" y="136.6" width="2.7" height="6.5" fill="#efebe2" opacity="0.37"/>
<rect x="140.3" y="170.7" width="1.8" height="3.8" fill="#8a91ab" opacity="0.38"/>
<rect x="99.5" y="61.6" width="2.2" height="4.9" fill="#e6e0d2" opacity="0.41"/>
<rect x="7.2" y="128.1" width="2.5" height="3.5" fill="#626c90" opacity="0.44"/>
<rect x="47.6" y="107.9" width="1.6" height="6.9" fill="#efebe2" opacity="0.46"/>
<rect x="60.7" y="79.7" width="2.0" height="7.3" fill="#8a91ab" opacity="0.45"/>
<rect x="8.0" y="170.4" width="2.4" height="4.5" fill="#626c90" opacity="0.57"/>
<rect x="17.3" y="58.0" width="1.8" height="6.6" fill="#b8ab8c" opacity="0.58"/>
<rect x="71.5" y="183.0" width="2.5" height="5.5" fill="#8a91ab" opacity="0.69"/>
<rect x="184.0" y="17.0" width="2.3" height="5.1" fill="#626c90" opacity="0.45"/>
<rect x="114.2" y="136.5" width="1.6" height="4.6" fill="#efebe2" opacity="0.69"/>
<rect x="176.1" y="119.1" width="2.6" height="7.4" fill="#626c90" opacity="0.69"/>
<rect x="9.9" y="111.4" width="1.8" height="3.9" fill="#626c90" opacity="0.58"/>
<rect x="12.9" y="97.8" width="1.8" height="7.5" fill="#8a91ab" opacity="0.51"/>
<rect x="149.1" y="32.6" width="1.4" height="7.3" fill="#8a91ab" opacity="0.43"/>
<rect x="67.0" y="181.1" width="1.2" height="4.5" fill="#e6e0d2" opacity="0.69"/>
<rect x="68.9" y="50.6" width="2.1" height="6.3" fill="#efebe2" opacity="0.52"/>
<rect x="115.8" y="71.7" width="2.5" height="7.5" fill="#8a91ab" opacity="0.65"/>
<rect x="60.1" y="91.1" width="2.0" height="7.9" fill="#b8ab8c" opacity="0.56"/>
<rect x="35.1" y="74.7" width="2.0" height="2.6" fill="#a68f7a" opacity="0.53"/>
<rect x="4.1" y="19.8" width="1.3" height="6.5" fill="#e6e0d2" opacity="0.38"/>
<rect x="40.6" y="119.1" width="1.4" height="3.6" fill="#a68f7a" opacity="0.66"/>
<rect x="0.9" y="26.1" width="1.8" height="6.8" fill="#626c90" opacity="0.53"/>
<rect x="185.2" y="13.3" width="2.7" height="7.4" fill="#b8ab8c" opacity="0.69"/>
<rect x="142.0" y="146.7" width="1.3" height="6.6" fill="#efebe2" opacity="0.69"/>
<rect x="121.1" y="137.0" width="2.0" height="7.6" fill="#8a91ab" opacity="0.61"/>
<rect x="40.4" y="130.6" width="1.9" height="3.0" fill="#e6e0d2" opacity="0.38"/>
<rect x="17.1" y="19.2" width="1.7" height="3.7" fill="#626c90" opacity="0.58"/>
<rect x="148.4" y="120.8" width="1.4" height="4.1" fill="#efebe2" opacity="0.49"/>
<rect x="147.8" y="137.5" width="2.6" height="5.4" fill="#e6e0d2" opacity="0.61"/>
<rect x="152.7" y="96.3" width="1.3" height="7.8" fill="#626c90" opacity="0.47"/>
<rect x="182.7" y="176.0" width="2.5" height="3.5" fill="#efebe2" opacity="0.65"/>
<rect x="141.0" y="29.1" width="2.8" height="4.6" fill="#8a91ab" opacity="0.68"/>
<rect x="88.4" y="181.4" width="2.5" height="7.7" fill="#b8ab8c" opacity="0.39"/>
<rect x="130.5" y="101.9" width="1.9" height="4.8" fill="#e6e0d2" opacity="0.43"/>
<rect x="158.0" y="58.5" width="1.3" height="7.4" fill="#626c90" opacity="0.36"/>
<rect x="134.7" y="177.5" width="1.8" height="6.1" fill="#8a91ab" opacity="0.66"/>
<rect x="103.3" y="88.3" width="2.5" height="2.7" fill="#a68f7a" opacity="0.41"/>
<rect x="41.5" y="152.3" width="1.8" height="5.1" fill="#e6e0d2" opacity="0.39"/>
<rect x="130.3" y="106.8" width="2.4" height="6.1" fill="#8a91ab" opacity="0.37"/>
<rect x="86.8" y="78.0" width="1.6" height="5.1" fill="#b8ab8c" opacity="0.46"/>
<rect x="182.4" y="87.6" width="2.3" height="3.6" fill="#e6e0d2" opacity="0.40"/>
<rect x="49.3" y="177.8" width="2.2" height="5.1" fill="#8a91ab" opacity="0.51"/>
<rect x="167.7" y="28.2" width="2.0" height="7.7" fill="#8a91ab" opacity="0.53"/>
<rect x="118.3" y="127.4" width="2.5" height="7.2" fill="#626c90" opacity="0.42"/>
<rect x="100.3" y="108.2" width="2.5" height="2.7" fill="#8a91ab" opacity="0.55"/>
<rect x="179.9" y="47.3" width="2.7" height="6.8" fill="#8a91ab" opacity="0.65"/>
<rect x="13.9" y="73.6" width="2.4" height="4.7" fill="#b8ab8c" opacity="0.47"/>
<rect x="15.1" y="61.9" width="2.3" height="5.3" fill="#efebe2" opacity="0.49"/>
<rect x="91.3" y="75.5" width="1.6" height="2.5" fill="#626c90" opacity="0.42"/>
<rect x="99.7" y="156.3" width="1.9" height="6.7" fill="#8a91ab" opacity="0.69"/>
<rect x="138.2" y="114.8" width="1.4" height="5.8" fill="#b8ab8c" opacity="0.51"/>
<rect x="131.3" y="76.1" width="1.6" height="7.2" fill="#e6e0d2" opacity="0.54"/>
<rect x="181.8" y="2.2" width="2.0" height="5.5" fill="#b8ab8c" opacity="0.40"/>
<rect x="172.1" y="85.5" width="1.9" height="4.5" fill="#a68f7a" opacity="0.61"/>
<rect x="102.7" y="48.8" width="1.7" height="4.8" fill="#8a91ab" opacity="0.60"/>
<rect x="2.9" y="113.6" width="2.2" height="5.3" fill="#8a91ab" opacity="0.45"/>
<rect x="29.2" y="81.7" width="2.1" height="7.9" fill="#8a91ab" opacity="0.63"/>
<rect x="100.7" y="109.7" width="1.8" height="6.7" fill="#8a91ab" opacity="0.61"/>
<rect x="144.0" y="161.1" width="1.8" height="6.6" fill="#b8ab8c" opacity="0.50"/>
<rect x="129.1" y="93.4" width="1.8" height="4.2" fill="#626c90" opacity="0.44"/>
<rect x="16.3" y="98.6" width="1.6" height="6.1" fill="#efebe2" opacity="0.41"/>
<rect x="54.3" y="45.6" width="1.9" height="6.7" fill="#8a91ab" opacity="0.48"/>
<rect x="5.3" y="99.0" width="1.8" height="4.9" fill="#8a91ab" opacity="0.58"/>
<rect x="37.1" y="140.4" width="2.6" height="2.9" fill="#e6e0d2" opacity="0.67"/>
<rect x="40.3" y="22.6" width="1.9" height="4.1" fill="#626c90" opacity="0.38"/>
<rect x="147.6" y="48.2" width="1.5" height="5.1" fill="#b8ab8c" opacity="0.68"/>
<rect x="69.6" y="106.6" width="2.0" height="6.0" fill="#b8ab8c" opacity="0.39"/>
<rect x="13.4" y="83.6" width="1.3" height="7.0" fill="#626c90" opacity="0.57"/>
<rect x="101.6" y="183.4" width="2.8" height="3.3" fill="#b8ab8c" opacity="0.44"/>
<rect x="117.9" y="66.5" width="1.9" height="7.0" fill="#8a91ab" opacity="0.59"/>
<rect x="49.0" y="6.6" width="2.7" height="3.1" fill="#626c90" opacity="0.59"/>
<rect x="10.4" y="98.4" width="1.6" height="7.1" fill="#8a91ab" opacity="0.57"/>
<rect x="142.1" y="157.6" width="2.8" height="4.5" fill="#b8ab8c" opacity="0.36"/>
<rect x="47.1" y="66.6" width="2.6" height="3.6" fill="#b8ab8c" opacity="0.35"/>
<rect x="164.1" y="7.4" width="2.0" height="5.7" fill="#8a91ab" opacity="0.55"/>
<rect x="137.9" y="83.6" width="2.2" height="7.7" fill="#8a91ab" opacity="0.48"/>
<rect x="154.4" y="170.2" width="1.5" height="7.2" fill="#8a91ab" opacity="0.46"/>
<rect x="101.4" y="113.2" width="1.3" height="3.6" fill="#8a91ab" opacity="0.69"/>
<rect x="109.8" y="89.5" width="2.7" height="2.7" fill="#e6e0d2" opacity="0.44"/>
<rect x="108.8" y="83.5" width="2.6" height="2.9" fill="#8a91ab" opacity="0.49"/>
<rect x="129.6" y="156.3" width="2.4" height="4.0" fill="#b8ab8c" opacity="0.40"/>
<rect x="22.1" y="129.1" width="1.4" height="7.4" fill="#efebe2" opacity="0.65"/>
<rect x="166.6" y="42.4" width="2.1" height="4.0" fill="#a68f7a" opacity="0.68"/>
<rect x="177.0" y="171.3" width="2.1" height="4.9" fill="#8a91ab" opacity="0.62"/>
<rect x="122.3" y="50.5" width="1.9" height="6.5" fill="#8a91ab" opacity="0.67"/>
<rect x="48.5" y="20.4" width="2.8" height="3.9" fill="#b8ab8c" opacity="0.45"/>
<rect x="5.1" y="110.3" width="1.4" height="5.1" fill="#626c90" opacity="0.40"/>
<rect x="64.7" y="112.5" width="1.6" height="6.6" fill="#e6e0d2" opacity="0.61"/>
<rect x="64.9" y="164.9" width="1.3" height="7.2" fill="#8a91ab" opacity="0.61"/>
<rect x="54.3" y="121.7" width="2.6" height="6.0" fill="#b8ab8c" opacity="0.59"/>
<rect x="106.6" y="38.0" width="1.6" height="7.2" fill="#626c90" opacity="0.57"/>
<rect x="49.9" y="140.4" width="2.3" height="3.5" fill="#a68f7a" opacity="0.56"/>
</g></g>
</svg>
  <div id="c1" class="abs" style="left:54px;letter-spacing:0.487px;top:256.5px;font-size:14px;line-height:19.7px;color:#464646;-webkit-text-stroke:0.2px #464646">Cliquez sur l’image pour</div>
  <div id="c2" class="abs" style="left:65px;letter-spacing:0.391px;top:277.0px;font-size:14px;line-height:19.7px;color:#464646;-webkit-text-stroke:0.2px #464646">accéder à la ressource</div>
  <div id="c3" class="abs" style="left:69.2px;letter-spacing:0.68px;top:296.6px;font-size:14px;line-height:19.7px;color:#464646;-webkit-text-stroke:0.2px #464646">du musée virtuel</div>
</div>

</div></body></html>
